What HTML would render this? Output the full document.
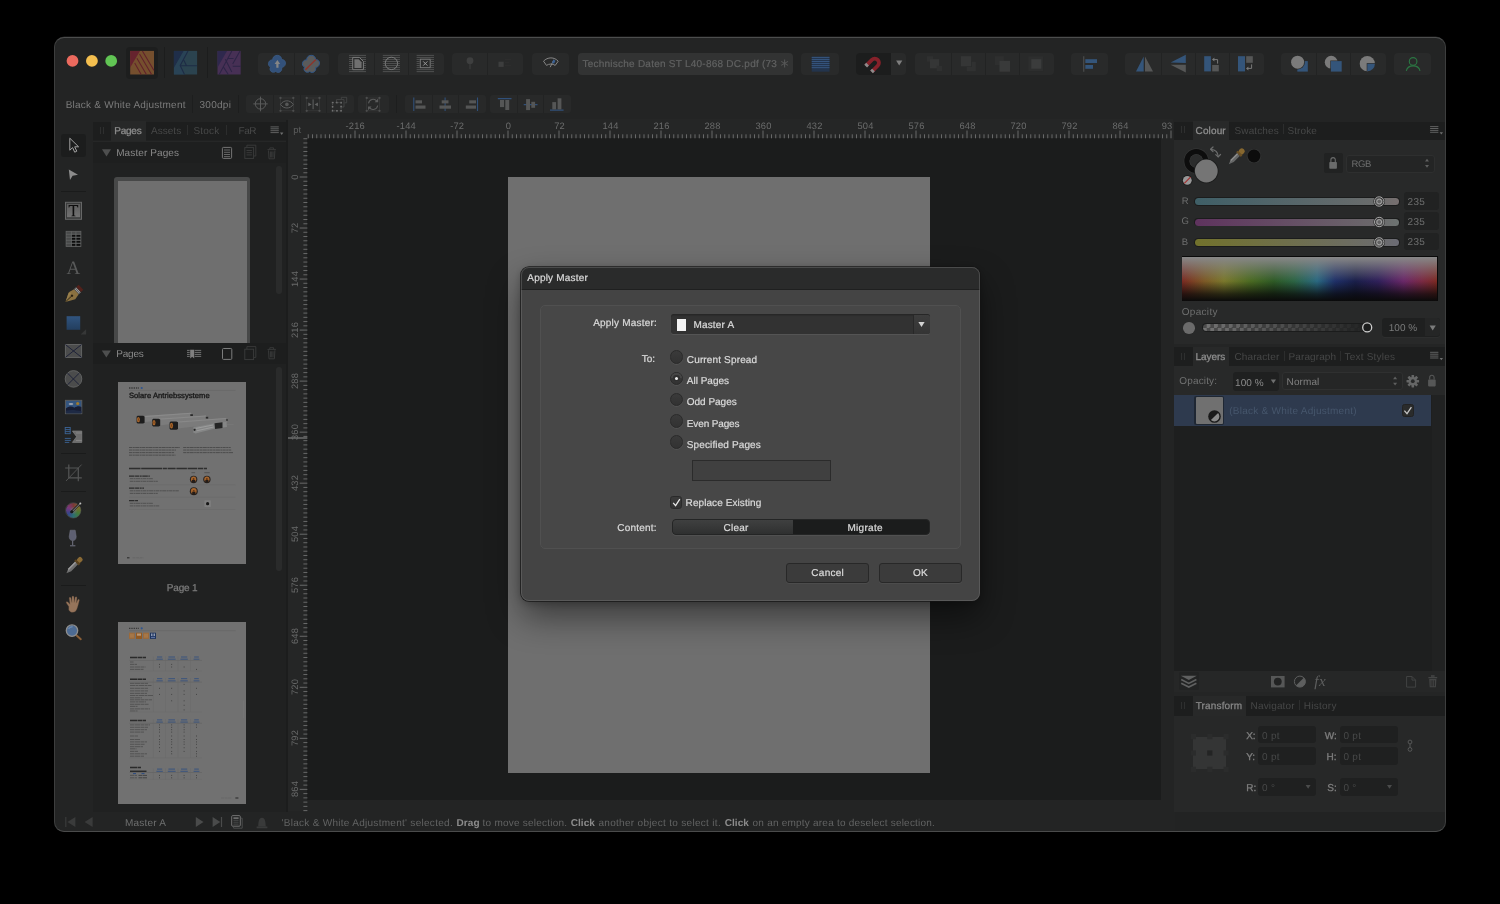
<!DOCTYPE html>
<html><head><meta charset="utf-8"><title>Apply Master</title>
<style>
*{box-sizing:border-box;margin:0;padding:0}
html,body{width:1500px;height:904px;background:#000;overflow:hidden}
body{font-family:"Liberation Sans",sans-serif;font-size:10px;color:#7a7a7a;position:relative;text-rendering:geometricPrecision}
.a{position:absolute}
.t{position:absolute;white-space:pre;line-height:12px;height:12px}
#win{will-change:transform;position:absolute;left:0;top:0;width:1500px;height:904px;background:#232424;clip-path:inset(36.600px 54.400px 71.900px 54.300px round 10px)}
#winb{position:absolute;left:54.3px;top:36.6px;width:1391.300px;height:795.500px;border-radius:10px;border:1px solid #3d3e3e;border-top-color:#4c4d4d;border-bottom-color:#4a4b4b;pointer-events:none}
.g{position:absolute;background:#292a2a;border-radius:4px}
.gd{position:absolute;background:#222323;width:1px}
.tab{position:absolute;background:#282929}
svg{position:absolute;left:0;top:0;overflow:visible}
</style></head><body>
<div id="win">
<!-- ===== top toolbar ===== -->
<div class="a" style="left:126.3px;top:47px;width:31.5px;height:31.5px;background:#1d1e1e;border-radius:4px"></div>
<div class="a" style="left:163.5px;top:46.7px;width:1px;height:31.5px;background:#1c1d1d"></div>
<div class="a" style="left:207.3px;top:46.7px;width:1px;height:31.5px;background:#1c1d1d"></div>
<!-- groups -->
<div class="g" style="left:258.3px;top:53.100px;width:70.9px;height:21.600px"></div><div class="gd" style="left:293.6px;top:53.100px;height:21.600px"></div>
<div class="g" style="left:338.3px;top:53.100px;width:105.4px;height:21.600px"></div><div class="gd" style="left:374px;top:53.100px;height:21.600px"></div><div class="gd" style="left:408px;top:53.100px;height:21.600px"></div>
<div class="g" style="left:451.7px;top:53.100px;width:71.3px;height:21.600px"></div><div class="gd" style="left:487px;top:53.100px;height:21.600px"></div>
<div class="g" style="left:531.7px;top:53.100px;width:37.8px;height:21.600px"></div>
<div class="g" style="left:578px;top:53.100px;width:214.8px;height:21.600px;background:#323333"></div>
<div class="t" style="left:582.400px;top:59px;font-size:10px;color:#616262;letter-spacing:.245px;-webkit-text-stroke:.2px #616262" id="doct">Technische Daten ST L40-868 DC.pdf (73</div>
<div class="g" style="left:801.3px;top:53.100px;width:37.5px;height:21.600px"></div>
<div class="g" style="left:856.2px;top:53.100px;width:50px;height:21.600px"></div>
<div class="a" style="left:856.2px;top:53.100px;width:34.6px;height:21.600px;background:#1c1d1d;border-radius:4px 0 0 4px"></div>
<div class="g" style="left:915.3px;top:53.100px;width:138.9px;height:21.600px"></div><div class="gd" style="left:951px;top:53.100px;height:21.600px"></div><div class="gd" style="left:985.2px;top:53.100px;height:21.600px"></div><div class="gd" style="left:1019.4px;top:53.100px;height:21.600px"></div>
<div class="g" style="left:1071.2px;top:53.100px;width:37.1px;height:21.600px"></div>
<div class="g" style="left:1125.3px;top:53.100px;width:138.9px;height:21.600px"></div><div class="gd" style="left:1161.3px;top:53.100px;height:21.600px"></div><div class="gd" style="left:1194.7px;top:53.100px;height:21.600px"></div><div class="gd" style="left:1228.9px;top:53.100px;height:21.600px"></div>
<div class="g" style="left:1280.5px;top:53.100px;width:105.6px;height:21.600px"></div><div class="gd" style="left:1316.2px;top:53.100px;height:21.600px"></div><div class="gd" style="left:1350.1px;top:53.100px;height:21.600px"></div>
<div class="g" style="left:1393.9px;top:53.100px;width:37.4px;height:21.600px"></div>
<!-- context toolbar -->
<div class="t" style="left:65.700px;top:100px;font-size:10px;color:#7b7b7b;letter-spacing:.23px" id="ctx1">Black &amp; White Adjustment</div>
<div class="t" style="left:199.500px;top:100px;font-size:10px;color:#7b7b7b;letter-spacing:.28px">300dpi</div>
<div class="a" style="left:192.200px;top:95px;width:1px;height:18px;background:#1d1e1e"></div>
<div class="a" style="left:238.100px;top:95px;width:1px;height:18px;background:#1d1e1e"></div>
<div class="a" style="left:396.400px;top:95px;width:1px;height:18px;background:#1d1e1e"></div>
<div class="g" style="left:246.3px;top:95px;width:107.9px;height:18px;border-radius:3px;background:#282929"></div><div class="gd" style="left:273.4px;top:95px;height:18px"></div><div class="gd" style="left:300.4px;top:95px;height:18px"></div><div class="gd" style="left:326.4px;top:95px;height:18px"></div>
<div class="g" style="left:357.5px;top:95px;width:31.2px;height:18px;border-radius:3px;background:#282929"></div>
<div class="g" style="left:404.7px;top:95px;width:81.5px;height:18px;border-radius:3px;background:#282929"></div><div class="gd" style="left:432.2px;top:95px;height:18px"></div><div class="gd" style="left:458px;top:95px;height:18px"></div>
<div class="g" style="left:489.7px;top:95px;width:81.5px;height:18px;border-radius:3px;background:#282929"></div><div class="gd" style="left:517.2px;top:95px;height:18px"></div><div class="gd" style="left:543px;top:95px;height:18px"></div>
<svg width="1500" height="904" viewBox="0 0 1500 904">
<!-- traffic lights -->
<circle cx="72.5" cy="60.9" r="5.9" fill="#ec6a5e"/><circle cx="91.9" cy="60.9" r="5.9" fill="#f4bf4f"/><circle cx="111.2" cy="60.9" r="5.9" fill="#61c554"/>
<!-- publisher -->
<g><rect x="130.200" y="50.900" width="23.800" height="23.600" fill="#754f2e"/>
<path d="M130.200 50.900H140L130.200 67.600Z" fill="#66232e"/>
<g stroke="#61212b" stroke-width="1.050" fill="none"><path d="M134.700 63.100L141.200 74.500M136.900 58.300L146.400 74.500M139.500 54.100L151.600 74.500M142.400 50.900L154 70.600"/></g></g>
<!-- designer -->
<g><rect x="173.900" y="50.900" width="23.200" height="23.600" fill="#2b434f"/>
<path d="M173.900 50.900H183.700L173.900 67.900Z" fill="#1f2e49"/>
<path d="M173.900 67.900L183.700 50.900H188L180.200 65.400L184.500 74.500H173.900Z" fill="#2a4358" opacity=".75"/>
<g stroke="#1e2c46" stroke-width="1.100" fill="none"><path d="M188 50.900L180.200 65.400L184.500 74.500M180.400 65.700H197.100M183.800 60.200L186.400 65.400"/></g></g>
<!-- photo -->
<g><rect x="217.500" y="50.900" width="23.200" height="23.600" fill="#473055"/>
<path d="M217.500 50.900H227L217.500 67.600Z" fill="#2e284d"/>
<g stroke="#2d2546" stroke-width="1.050" fill="none"><path d="M231.800 50.900L219.200 74.500M240 50.900L232.700 64.100M232.700 66.300H240.700M225.300 59.300L231.800 71.900M223.500 67.100L228.300 74.500M227.500 58.500H233.500"/></g></g>
<!-- flower 1 -->
<defs><path id="fl" d="M0-8.600C3-8.600 4.600-6.400 4.300-4.300C6.600-4.600 8.900-2.600 8.200.2C7.600 2.800 5.600 3.600 4.400 3.500C5.200 5.600 3.800 8.400 1 8.600C-.2 8.600-1 8 -1.400 7.400C-2.400 8.600-5 9-6.600 7C-7.600 5.600-7.200 4-6.600 3.200C-8.400 2.600-9.400 .4-8.400-1.800C-7.600-3.600-5.800-4.200-4.400-4C-4.800-6.200-3-8.600 0-8.600Z"/></defs>
<g transform="translate(277.200 63.900)"><use href="#fl" fill="#33517a" stroke="#3a5a84" stroke-width=".8"/><path d="M.2-3.800L3 .2H1.300V3.800H-.9V.2H-2.600Z" fill="#858585"/></g>
<g transform="translate(311.200 63.900)"><use href="#fl" fill="#5a5b5b" stroke="#305789" stroke-width="1"/><path d="M-5.800 5.800L4.700-4.400" stroke="#8e3329" stroke-width="1.300"/></g>
<!-- text wrap icons -->
<path d="M349 55.40H366M349 57.43H366M349 59.46H366M349 61.49H366M349 63.52H366M349 65.55H366M349 67.58H366M349 69.61H366M349 71.64H366M382.8 55.40H400M382.8 57.43H400M382.8 59.46H400M382.8 61.49H400M382.8 63.52H400M382.8 65.55H400M382.8 67.58H400M382.8 69.61H400M382.8 71.64H400M416.6 55.40H434M416.6 57.43H434M416.6 69.61H434M416.6 71.64H434M416.6 59.46H419.6M416.6 61.49H419.6M416.6 63.52H419.6M416.6 65.55H419.6M416.6 67.58H419.6M431 59.46H434M431 61.49H434M431 63.52H434M431 65.55H434M431 67.58H434" stroke="#4f5050" stroke-width="1" fill="none"/>
<path d="M352.700 57.400h6.700l4 4v8.300h-10.700z" fill="#2a2b2b" stroke="#7a7b7b" stroke-width="1" stroke-linejoin="round"/><path d="M354.400 59.300h4.300l2.900 2.900v5.700h-7.200z" fill="#707070"/>
<circle cx="391.400" cy="63.400" r="6.200" fill="none" stroke="#7a7b7b" stroke-width="1"/>
<rect x="420.300" y="59.200" width="9.900" height="8.500" fill="#2a2b2b" stroke="#7a7b7b" stroke-width="1"/><path d="M423.200 61.400l4.200 4.200m0-4.200l-4.200 4.200" stroke="#9a9a9a" stroke-width="1"/>
<!-- pin / square (dim) -->
<circle cx="470" cy="60.7" r="3.4" fill="#3e3f3f"/><path d="M470 63v6.2" stroke="#3e3f3f" stroke-width="1"/>
<rect x="498.5" y="61.7" width="5.2" height="5.2" fill="#3d3e3e"/><path d="M505 59.5h6m-6 3h4m-4 3h6" stroke="#2e2f2f" stroke-width=".8"/>
<!-- preview eye -->
<g fill="none" stroke="#868686" stroke-width="1"><path d="M543.5 61.2C547.5 56.8 554.5 56.8 558.2 61.2L555.2 65.4C552.8 63.6 548.8 63.6 546.5 65.4Z"/><path d="M553.8 59.8L550.2 67.2"/></g><path d="M553.4 59.6l2.2 1.2-1.6 3-2-1z" fill="#3a6092"/>
<!-- baseline grid -->
<rect x="811.7" y="56.7" width="17.8" height="15" fill="#23344c"/><path d="M811.7 57.4h17.8m-17.8 2.05h17.8m-17.8 2.05h17.8m-17.8 2.05h17.8m-17.8 2.05h17.8m-17.8 2.05h17.8" stroke="#3b5e8b" stroke-width=".8"/>
<!-- magnet -->
<g transform="translate(874 63.600) rotate(45) scale(1.120)"><path d="M-5.400 6.600V-1A5.400 5.400 0 0 1 5.400-1V6.600H2V-1A2 2 0 0 0-2-1V6.600Z" fill="#86212a"/><rect x="-5.4" y="4.4" width="3.4" height="2.4" fill="#8c8c8c"/><rect x="2" y="4.4" width="3.4" height="2.4" fill="#8c8c8c"/></g>
<path d="M896.1 60.6h6.2l-3.1 4.9z" fill="#7e7e7e"/>
<!-- arrange (dim) -->
<g fill="#353636"><rect x="927" y="56.2" width="6" height="5.5" fill="#2f3030"/><rect x="930" y="59.2" width="9.2" height="9.1"/><rect x="936.7" y="65.8" width="5.3" height="5.4" fill="#2f3030"/>
<rect x="960.8" y="56.2" width="10.4" height="10.1"/><path d="M971.8 61.7h4v9.5h-9.1v-4.2h5.1z" fill="#303131"/>
<rect x="995" y="56.2" width="8.8" height="8.8" fill="#2e2f2f"/><rect x="999.5" y="60.8" width="10.5" height="10.9" fill="#393a3a"/>
<rect x="1028.3" y="56.3" width="14.8" height="14.8" fill="#2d2e2e"/><rect x="1031.3" y="59.2" width="10" height="9.5" fill="#3b3c3c"/></g>
<!-- align -->
<path d="M1083.7 56.2v15.5" stroke="#484949" stroke-width="1.3"/><rect x="1085.3" y="59.2" width="11.7" height="3.8" fill="#34557a"/><rect x="1085.3" y="65" width="7.7" height="3.8" fill="#34557a"/>
<!-- flips -->
<path d="M1136 71.4L1143.7 56.6V71.4Z" fill="#34557a"/><path d="M1145 56.6V71.4H1153Z" fill="#565757"/>
<path d="M1170.6 62.6L1185.8 54.8V63Z" fill="#34557a"/><path d="M1170.6 64.8H1185.8V72.6Z" fill="#565757"/>
<rect x="1204.2" y="56.2" width="6.7" height="15.2" fill="#34557a"/><rect x="1212.2" y="65" width="6.6" height="6.4" fill="#565757"/><path d="M1217.6 63.6v-4h-4.2" fill="none" stroke="#7a7a7a" stroke-width="1"/><path d="M1214.4 57.6v4l-2.4-2z" fill="#7a7a7a"/>
<rect x="1238" y="56.2" width="7" height="15.2" fill="#34557a"/><rect x="1246.2" y="56.2" width="6.6" height="6.6" fill="#565757"/><path d="M1251.6 64.4v4h-4.2" fill="none" stroke="#7a7a7a" stroke-width="1"/><path d="M1248.4 66.4v4l-2.4-2z" fill="#7a7a7a"/>
<!-- booleans -->
<rect x="1297.3" y="61.1" width="10.5" height="10.5" fill="#34557a"/><circle cx="1297.6" cy="62.2" r="7.3" fill="#2a2b2b"/><circle cx="1297.6" cy="62.2" r="6.5" fill="#7b7b7b"/>
<circle cx="1331.2" cy="62.2" r="6.4" fill="#7b7b7b"/><rect x="1330.3" y="60.5" width="11.4" height="11.1" fill="#2a2b2b"/><rect x="1330.9" y="61.1" width="10.8" height="10.5" fill="#34557a"/>
<circle cx="1367.3" cy="63.7" r="7.6" fill="#7b7b7b"/><path d="M1367.3 63.7H1375.6V71.7H1367.3Z" fill="#2a2b2b" transform="translate(-.6 -.6)"/><path d="M1367.3 63.7H1374.9A7.6 7.6 0 0 1 1367.3 71.3Z" fill="#34557a"/>
<!-- account -->
<g fill="none" stroke="#2b7743" stroke-width="1.1"><circle cx="1413.1" cy="61.4" r="3.8"/><path d="M1406.3 70.8A7 6.2 0 0 1 1420 70.8"/></g>
<!-- doc title asterisk -->
<g stroke="#555656" stroke-width="1.1"><path d="M784.6 59.4v8M781.2 61.4l6.8 4M788 61.4l-6.8 4"/></g>
<!-- ctx icons -->
<g fill="none" stroke="#5a5b5b" stroke-width="1"><circle cx="260.500" cy="103.900" r="5.200"/><path d="M260.500 96.600v14.700M253.300 103.900h14.400"/></g>
<g stroke="#3a3b3b" stroke-width=".7" fill="none"><rect x="280.500" y="98" width="12.800" height="12.800"/><rect x="306.700" y="98" width="12.800" height="12.800"/><rect x="366.700" y="98" width="12.800" height="12.800"/></g>
<g fill="#4c4d4d"><circle cx="280.5" cy="98" r="1.15"/><circle cx="280.5" cy="110.8" r="1.15"/><circle cx="293.3" cy="98" r="1.15"/><circle cx="293.3" cy="110.8" r="1.15"/><circle cx="306.7" cy="98" r="1.15"/><circle cx="306.7" cy="110.8" r="1.15"/><circle cx="319.5" cy="98" r="1.15"/><circle cx="319.5" cy="110.8" r="1.15"/><circle cx="366.7" cy="98" r="1.15"/><circle cx="366.7" cy="110.8" r="1.15"/><circle cx="379.5" cy="98" r="1.15"/><circle cx="379.5" cy="110.8" r="1.15"/></g>
<path d="M280.500 104.400C283.500 99.600 290.300 99.600 293.300 104.400C290.300 109.200 283.500 109.200 280.500 104.400Z" fill="#292a2a" stroke="#5c5d5d" stroke-width="1"/><circle cx="286.900" cy="104.400" r="1.800" fill="#565757"/>
<path d="M313.100 99.400v9.800" stroke="#626363" stroke-width="1"/><path d="M308.300 102.500l3.300 1.900-3.300 1.900zM317.900 102.500l-3.300 1.900 3.300 1.900z" fill="#626363"/>
<g fill="none" stroke="#484949" stroke-width=".8"><path d="M336.500 102v-2.400h7.500v7.400h-2.400"/><path d="M341.300 99.200v-1.900h5.400v5.500h-2.200"/></g>
<rect x="332.600" y="102.600" width="8.500" height="8.200" fill="none" stroke="#555656" stroke-width=".8" stroke-dasharray="1.400 1.400"/>
<g fill="#707171"><rect x="331.8" y="101.8" width="1.600" height="1.600"/><rect x="336.1" y="101.8" width="1.600" height="1.600"/><rect x="340.3" y="101.8" width="1.600" height="1.600"/><rect x="331.8" y="105.9" width="1.600" height="1.600"/><rect x="340.3" y="105.9" width="1.600" height="1.600"/><rect x="331.8" y="110.0" width="1.600" height="1.600"/><rect x="336.1" y="110.0" width="1.600" height="1.600"/><rect x="340.3" y="110.0" width="1.600" height="1.600"/></g>
<g fill="none" stroke="#5a5b5b" stroke-width="1.100"><path d="M368.500 103.300a4.700 4.700 0 0 1 8.300-2.200M377.700 105.500a4.700 4.700 0 0 1-8.300 2.200"/></g><path d="M378.200 98.600v3.600h-3.600zM368 110.200v-3.600h3.600z" fill="#5a5b5b"/>
<!-- align icons ctx -->
<g stroke="#30507a" stroke-width="1.100"><path d="M413.800 97.500v13.600M445.100 97.500v13.600M477.500 97.500v13.600M497.800 98.600h13.700M523.700 104.600h13.800M550 110.100h13.600"/></g>
<g fill="#555656"><rect x="415.500" y="100.300" width="6.500" height="3.100"/><rect x="415.500" y="105.500" width="10" height="3.200"/>
<rect x="441.700" y="100.300" width="6.800" height="3.100"/><rect x="439.500" y="105.500" width="11.500" height="3.200"/>
<rect x="469.200" y="100.300" width="6.800" height="3.100"/><rect x="465.800" y="105.500" width="10.200" height="3.200"/>
<rect x="500" y="100" width="4.100" height="7.100"/><rect x="505.300" y="100" width="3.900" height="10"/>
<rect x="526.100" y="99.100" width="3.900" height="11"/><rect x="531.300" y="101.800" width="3.800" height="6"/>
<rect x="552.300" y="102.100" width="3.800" height="7.300"/><rect x="557.600" y="98.300" width="3.800" height="11.100"/></g>

</svg>
<!-- ===== left tools + pages panel ===== -->
<div class="a" style="left:61.3px;top:133.7px;width:24.6px;height:22.9px;background:#1c1d1d;border-radius:3px"></div>
<div class="a" style="left:60.8px;top:191.2px;width:25px;height:1px;background:#1a1b1b"></div>
<div class="a" style="left:60.8px;top:453.2px;width:25px;height:1px;background:#1a1b1b"></div>
<div class="a" style="left:60.8px;top:491.3px;width:25px;height:1px;background:#1a1b1b"></div>
<div class="a" style="left:60.8px;top:584.6px;width:25px;height:1px;background:#1a1b1b"></div>
<!-- panel bg -->
<div class="a" style="left:93px;top:120.2px;width:192.7px;height:692px;background:#202121"></div>
<div class="a" style="left:285.7px;top:120.2px;width:2.3px;height:692px;background:#1c1d1d"></div>
<div class="a" style="left:93px;top:120.200px;width:192.700px;height:1.500px;background:#232424"></div><div class="a" style="left:93px;top:121.700px;width:192.700px;height:18.100px;background:#1d1e1e"></div>
<div class="tab" style="left:111px;top:120.700px;width:35.200px;height:20.300px;background:#272828"></div>
<div class="a" style="left:93px;top:140.500px;width:192.700px;height:1.500px;background:#262727"></div><div class="a" style="left:93px;top:142px;width:192.700px;height:21.300px;background:#1e1f1f"></div>
<div class="t" style="left:114.3px;top:126px;color:#8d8d8d;font-size:10px;letter-spacing:-.25px;-webkit-text-stroke:0.30px #8d8d8d">Pages</div>
<div class="t" style="left:151px;top:126px;color:#474848;font-size:10px;letter-spacing:.03px">Assets</div>
<div class="t" style="left:193.4px;top:126px;color:#474848;font-size:10px;letter-spacing:.2px">Stock</div>
<div class="t" style="left:238.6px;top:126px;color:#474848;font-size:10px;letter-spacing:-.5px">FaR</div>
<div class="a" style="left:186.6px;top:124.5px;width:1px;height:10px;background:#2c2d2d"></div>
<div class="a" style="left:226px;top:124.5px;width:1px;height:10px;background:#2c2d2d"></div>
<div class="a" style="left:99.9px;top:126.800px;width:1px;height:7px;background:#2e2f2f"></div>
<div class="a" style="left:102.5px;top:126.800px;width:1px;height:7px;background:#2e2f2f"></div>
<div class="t" style="left:116.2px;top:148px;color:#8a8a8a;font-size:10px;letter-spacing:.1px">Master Pages</div>
<!-- master thumb -->
<div class="a" style="left:276.3px;top:166px;width:6.2px;height:128px;background:#2a2b2b;border-radius:3px"></div>
<div class="a" style="left:114.1px;top:177px;width:136.1px;height:170px;background:#474848;border-radius:3px 3px 0 0"></div>
<div class="a" style="left:118px;top:180.9px;width:128.7px;height:165px;background:#6f6f6f"></div>
<!-- pages header -->
<div class="a" style="left:93px;top:343px;width:192.700px;height:20.800px;background:#1d1e1e"></div>
<div class="t" style="left:116.2px;top:349px;color:#8a8a8a;font-size:10px;letter-spacing:-.2px">Pages</div>
<div class="a" style="left:276.3px;top:367.3px;width:6.2px;height:204px;background:#2a2b2b;border-radius:3px"></div>
<!-- page 1 -->
<div class="a" id="p1" style="left:118px;top:381.700px;width:128.300px;height:182px;background:#717171"></div>
<div class="t" style="left:129px;top:391px;font-size:7.600px;color:#1b1b1b;letter-spacing:.04px;line-height:10px;height:10px;-webkit-text-stroke:0.38px #1b1b1b">Solare Antriebssysteme</div>
<div class="t" style="left:166.8px;top:583px;color:#7c7c7c;font-size:10px;letter-spacing:-.2px;-webkit-text-stroke:.25px #7c7c7c">Page 1</div>
<!-- page 2 -->
<div class="a" id="p2" style="left:118px;top:621.900px;width:128.300px;height:181.800px;background:#717171"></div>
<svg width="1500" height="904" viewBox="0 0 1500 904">
<defs><linearGradient id="rb" x1="0" y1="0" x2="0" y2="1"><stop offset="0" stop-color="#30547f"/><stop offset="1" stop-color="#233e5e"/></linearGradient>
<linearGradient id="tf" x1="0" y1="0" x2="0" y2="1"><stop offset="0" stop-color="#5c5c5c"/><stop offset="1" stop-color="#727272"/></linearGradient></defs>
<!-- move tool -->
<path d="M69.8 138.2V150.2L72.6 147.6L74.7 152.2L76.8 151.2L74.7 146.8H78.6Z" fill="#1c1d1d" stroke="#a2a2a2" stroke-width="1" stroke-linejoin="round"/>
<!-- node tool -->
<path d="M68.8 169.4L78 174.7L72.6 175.7L70 180Z" fill="#8c8c8c"/>
<!-- frame text -->
<rect x="65.500" y="202.300" width="16" height="17" fill="#3b3c3c" stroke="#666767" stroke-width="1"/><rect x="67" y="204" width="13" height="13.200" fill="url(#tf)"/>
<path d="M68.600 205h9.600v2.500h-.7c-.15-1.100-.6-1.500-1.700-1.500h-1.600v8.700c0 .75.300.95 1.300 1.050v.55h-4.200v-.55c1-.1 1.300-.3 1.300-1.050v-8.700h-1.600c-1.100 0-1.550.4-1.700 1.500h-.7z" fill="#0e0e0e"/>
<!-- table -->
<rect x="66.100" y="231.300" width="14.800" height="15.200" fill="#484949" stroke="#626363" stroke-width=".8"/>
<g fill="#0c0c0c"><rect x="71.800" y="234.800" width="3.700" height="2"/><rect x="76.300" y="234.800" width="4" height="2"/><rect x="71.800" y="237.800" width="3.700" height="2"/><rect x="76.300" y="237.800" width="4" height="2"/><rect x="71.800" y="240.800" width="3.700" height="2"/><rect x="76.300" y="240.800" width="4" height="2"/><rect x="71.800" y="243.800" width="3.700" height="2"/><rect x="76.300" y="243.800" width="4" height="2"/></g>
<g stroke="#6a6b6b" stroke-width=".6"><path d="M66 234.300h15M66 237.300h15M66 240.300h15M66 243.300h15M71.400 231.400v15.200M75.900 231.400v15.200"/></g>
<!-- pen -->
<g transform="translate(74.400 293.500) rotate(47) scale(1.070)"><path d="M-3.200-2.500h6.400l1.200 5.500-4.400 8.500-4.400-8.500z" fill="#8a7140"/><path d="M0 11.500V3.500" stroke="#2a2214" stroke-width=".8"/><circle cx="0" cy="3" r="1.100" fill="#2a2214"/><rect x="-3.200" y="-5.200" width="6.400" height="2.400" fill="#9a9a9a"/><rect x="-3.200" y="-8.400" width="6.400" height="3" fill="#53211b"/><path d="M-3.200-4h6.400" stroke="#444" stroke-width=".6"/><path d="M-2.500 1.500l-1.600 2.300 4.100 7.500z" fill="#a68d58" opacity=".55"/></g>
<!-- rect -->
<rect x="66.600" y="316.200" width="13.600" height="13.600" fill="url(#rb)"/><path d="M86.100 329.200v5.300h-5.500z" fill="#363737"/>
<!-- frame rect -->
<rect x="65.400" y="344.500" width="16.200" height="12.900" fill="#4b4c4c" stroke="#666767" stroke-width=".9"/><path d="M65.400 344.500l16.200 12.900M81.600 344.500l-16.200 12.900" stroke="#191d36" stroke-width=".9"/>
<!-- frame ellipse -->
<circle cx="73.500" cy="378.900" r="8.300" fill="#4b4c4c" stroke="#646565" stroke-width=".9"/><path d="M67.600 373.200l11.600 11.600M79.200 373.200l-11.600 11.600" stroke="#191d36" stroke-width=".9"/>
<!-- image -->
<rect x="65.400" y="400.300" width="16.400" height="13.400" fill="#34557f" stroke="#5e5f5f" stroke-width=".9"/><path d="M65.900 408.500c3-2.500 6-2.500 8.500-.8 2.500-1.800 5-2 7-.8v6.300h-15.500z" fill="#171d33"/><path d="M65.900 410.800c4-1.500 10-1 15.500.5v2h-15.500z" fill="#1e2a45"/><circle cx="77.700" cy="403.500" r="1.600" fill="#a07a2c"/><ellipse cx="71" cy="404" rx="2.400" ry=".9" fill="#9aa3b0"/>
<!-- data merge -->
<g fill="none" stroke="#3b6496" stroke-width=".9"><rect x="65.200" y="427.500" width="5" height="6.200"/><path d="M65.200 429.600h5M65.200 431.600h5M64.800 438.400h6M64.800 440.400h6M64.800 442.400h4.500"/></g><path d="M72.400 431h9.400v11.400h-9.400l4.200-5.700z" fill="#6c6c6c" stroke="#8a8a8a" stroke-width=".6"/><path d="M76 433h5.800M76 440.400h5.800" stroke="#8e8e8e" stroke-width=".8"/>
<!-- crop -->
<g fill="none" stroke="#555656" stroke-width="1.200"><path d="M68.800 464.400v13.500h13M65.100 468h13.200v13.300"/><path d="M66 481l15.600-16.400" stroke-width=".9"/></g>
<!-- glass -->
<path d="M70.200 530.200h5l1 6.400c0 2.800-1.500 4-3.500 4s-3.500-1.200-3.500-4z" fill="#5e6072" stroke="#747684" stroke-width=".5"/><path d="M72.700 540.600v4.600M70 545.800h5.400" stroke="#747684" stroke-width="1"/>
<!-- dropper -->
<g transform="translate(73.300 566.300) rotate(45) scale(1.220)"><rect x="-2" y="-9.800" width="4" height="4.800" rx="1.600" fill="#8a6a35"/><rect x="-2.600" y="-5.600" width="5.200" height="2" fill="#5a4320"/><path d="M-1.600-3.600h3.200v7.600l-1.600 4-1.600-4z" fill="#6e6e6e"/><path d="M-1.600-3.600h1.200v9.500l-1.200-2z" fill="#9a9a9a"/></g>
<!-- hand -->
<g fill="#95745b" stroke="#6e523c" stroke-width=".3"><path d="M68.800 606.500c-1.400-1.800-2.800-3.600-2.600-4.400.4-.8 1.600-.4 2.600.8l1.200 1.400-.8-6c-.1-1.200 1.500-1.400 1.800-.2l.9 4.400.1-5.500c0-1.200 1.800-1.200 1.900 0l.3 5.400.9-4.800c.3-1.200 1.900-.9 1.800.3l-.5 5.200 1.300-3.200c.5-1 1.900-.5 1.600.6-.8 3-1.400 6-2.400 8.500-.8 2-2 3.300-4.300 3.300-1.800 0-2.800-.8-3.800-2.400z"/></g>
<!-- zoom -->
<path d="M76.400 635.200l4.400 4" stroke="#8a5e36" stroke-width="2" stroke-linecap="round"/><circle cx="72" cy="630.600" r="5.700" fill="#4d6b93" stroke="#8e8e8e" stroke-width="1.300"/><path d="M68.600 629a3.800 3.800 0 0 1 4-2.200" stroke="#7f9cc0" stroke-width=".9" fill="none"/>
<!-- panel menu icon -->
<g id="pm"><path d="M270.500 126.900h8.300M270.500 128.800h8.300M270.500 130.700h8.300M270.500 132.600h8.300" stroke="#606161" stroke-width="1"/><path d="M280 132.600h3.400l-1.700 2.300z" fill="#6e6f6f"/></g>
<!-- header triangles -->
<path d="M102 149.200h9l-4.500 7.200z" fill="#4e4f4f"/><path d="M101.800 350.400h9.100l-4.550 7.100z" fill="#4e4f4f"/>
<!-- master header icons -->
<rect x="222.400" y="147.400" width="9.200" height="11" rx="1" fill="none" stroke="#7e7e7e" stroke-width=".9"/><path d="M224 150h6M224 152.300h6M224 154.500h6M224 156.600h6" stroke="#6e6e6e" stroke-width=".9"/>
<g fill="none" stroke="#3b3c3c" stroke-width=".9"><rect x="244.800" y="147.600" width="8.800" height="10.800"/><path d="M246.900 147.400v-2.200h8.900v10.800h-2M246.500 150.500h5.400M246.500 152.700h5.400M246.500 154.900h5.400"/></g>
<g fill="none" stroke="#3b3c3c" stroke-width=".9"><path d="M267.500 149.600h8.400M269.800 149.400v-1.500h3.800v1.500M268.500 150.500l.5 8.300h5.400l.5-8.300M270.400 151.500v6M271.700 151.500v6M273 151.500v6"/></g>
<!-- pages header icons -->
<path d="M187 350.400h14.200M187 352.400h14.200M187 354.400h14.200M187 356.400h14.200" stroke="#7a7b7b" stroke-width=".9"/><path d="M189.700 349.600h5v9.800l-2.500-2.200-2.500 2.200z" fill="#1e1f1f"/><path d="M190.200 349.800h4v8.800l-2-1.800-2 1.800z" fill="#808080"/>
<rect x="222.500" y="348.500" width="9.300" height="10.900" rx="1" fill="none" stroke="#7c7d7d" stroke-width="1"/>
<g fill="none" stroke="#3b3c3c" stroke-width=".9"><rect x="244.800" y="349.200" width="8.800" height="10.400"/><path d="M246.900 349v-2.400h8.900v10.800h-2"/></g>
<g fill="none" stroke="#3b3c3c" stroke-width=".9"><path d="M267.500 349.400h8.400M269.800 349.200v-1.500h3.800v1.500M268.500 350.300l.5 8.500h5.400l.5-8.500M270.400 351.300v6M271.700 351.300v6M273 351.300v6"/></g>
</svg>
<!-- colour wheel + A -->
<div class="a" style="left:65.500px;top:502.700px;width:15.400px;height:15.400px;border-radius:50%;background:conic-gradient(from 0deg,#7a3838,#7a6c2c,#467a38,#2c7070,#38448a,#7a387a,#7a3838)"></div>
<div class="a" style="left:69.500px;top:506.700px;width:7.400px;height:7.400px;border-radius:50%;background:radial-gradient(#6a6a6a,rgba(90,90,90,0))"></div>
<svg width="1500" height="904" viewBox="0 0 1500 904"><circle cx="73.200" cy="510.400" r="7.700" fill="none" stroke="#555" stroke-width=".5"/><path d="M71.500 512l8-8" stroke="#1a1a1a" stroke-width="2.200" stroke-linecap="round"/><path d="M72.500 511.200l7.300-7.300" stroke="#a8a8a8" stroke-width=".8" stroke-linecap="round"/><circle cx="80.300" cy="503.400" r="1" fill="#c0c0c0"/><circle cx="71.800" cy="511.800" r="1.500" fill="#1a1a1a"/></svg>
<div class="t" style="left:63.400px;top:259px;width:20px;text-align:center;font-family:'Liberation Serif',serif;font-size:19px;line-height:20px;height:20px;color:#595a5a">A</div>
<!-- ===== canvas + rulers ===== -->
<div class="a" style="left:288px;top:119.500px;width:884.500px;height:692.500px;background:#232424"></div>
<div class="a" style="left:307.400px;top:138.300px;width:853.400px;height:661.500px;background:#1b1c1c"></div>
<div class="a" style="left:288px;top:118.800px;width:884.500px;height:19.500px;background:#252626"></div>
<div class="a" style="left:288px;top:138.300px;width:19.400px;height:673.200px;background:#252626"></div>
<div class="a" style="left:508px;top:177px;width:421.700px;height:596.400px;background:#6f6f6f"></div>
<svg width="1500" height="904" viewBox="0 0 1500 904"><path d="M308.25 134.300v4M312.50 134.300v4M316.75 134.300v4M321.00 134.300v4M325.25 134.300v4M329.50 134.300v4M333.75 134.300v4M338.00 134.300v4M342.25 134.300v4M346.50 134.300v4M350.75 134.300v4M355.00 130.500v7.800M359.25 134.300v4M363.50 134.300v4M367.75 134.300v4M372.00 134.300v4M376.25 134.300v4M380.50 134.300v4M384.75 134.300v4M389.00 134.300v4M393.25 134.300v4M397.50 134.300v4M401.75 134.300v4M406.00 130.500v7.800M410.25 134.300v4M414.50 134.300v4M418.75 134.300v4M423.00 134.300v4M427.25 134.300v4M431.50 134.300v4M435.75 134.300v4M440.00 134.300v4M444.25 134.300v4M448.50 134.300v4M452.75 134.300v4M457.00 130.500v7.800M461.25 134.300v4M465.50 134.300v4M469.75 134.300v4M474.00 134.300v4M478.25 134.300v4M482.50 134.300v4M486.75 134.300v4M491.00 134.300v4M495.25 134.300v4M499.50 134.300v4M503.75 134.300v4M508.00 130.500v7.800M512.25 134.300v4M516.50 134.300v4M520.75 134.300v4M525.00 134.300v4M529.25 134.300v4M533.50 134.300v4M537.75 134.300v4M542.00 134.300v4M546.25 134.300v4M550.50 134.300v4M554.75 134.300v4M559.00 130.500v7.800M563.25 134.300v4M567.50 134.300v4M571.75 134.300v4M576.00 134.300v4M580.25 134.300v4M584.50 134.300v4M588.75 134.300v4M593.00 134.300v4M597.25 134.300v4M601.50 134.300v4M605.75 134.300v4M610.00 130.500v7.800M614.25 134.300v4M618.50 134.300v4M622.75 134.300v4M627.00 134.300v4M631.25 134.300v4M635.50 134.300v4M639.75 134.300v4M644.00 134.300v4M648.25 134.300v4M652.50 134.300v4M656.75 134.300v4M661.00 130.500v7.800M665.25 134.300v4M669.50 134.300v4M673.75 134.300v4M678.00 134.300v4M682.25 134.300v4M686.50 134.300v4M690.75 134.300v4M695.00 134.300v4M699.25 134.300v4M703.50 134.300v4M707.75 134.300v4M712.00 130.500v7.800M716.25 134.300v4M720.50 134.300v4M724.75 134.300v4M729.00 134.300v4M733.25 134.300v4M737.50 134.300v4M741.75 134.300v4M746.00 134.300v4M750.25 134.300v4M754.50 134.300v4M758.75 134.300v4M763.00 130.500v7.800M767.25 134.300v4M771.50 134.300v4M775.75 134.300v4M780.00 134.300v4M784.25 134.300v4M788.50 134.300v4M792.75 134.300v4M797.00 134.300v4M801.25 134.300v4M805.50 134.300v4M809.75 134.300v4M814.00 130.500v7.800M818.25 134.300v4M822.50 134.300v4M826.75 134.300v4M831.00 134.300v4M835.25 134.300v4M839.50 134.300v4M843.75 134.300v4M848.00 134.300v4M852.25 134.300v4M856.50 134.300v4M860.75 134.300v4M865.00 130.500v7.800M869.25 134.300v4M873.50 134.300v4M877.75 134.300v4M882.00 134.300v4M886.25 134.300v4M890.50 134.300v4M894.75 134.300v4M899.00 134.300v4M903.25 134.300v4M907.50 134.300v4M911.75 134.300v4M916.00 130.500v7.800M920.25 134.300v4M924.50 134.300v4M928.75 134.300v4M933.00 134.300v4M937.25 134.300v4M941.50 134.300v4M945.75 134.300v4M950.00 134.300v4M954.25 134.300v4M958.50 134.300v4M962.75 134.300v4M967.00 130.500v7.800M971.25 134.300v4M975.50 134.300v4M979.75 134.300v4M984.00 134.300v4M988.25 134.300v4M992.50 134.300v4M996.75 134.300v4M1001.00 134.300v4M1005.25 134.300v4M1009.50 134.300v4M1013.75 134.300v4M1018.00 130.500v7.800M1022.25 134.300v4M1026.50 134.300v4M1030.75 134.300v4M1035.00 134.300v4M1039.25 134.300v4M1043.50 134.300v4M1047.75 134.300v4M1052.00 134.300v4M1056.25 134.300v4M1060.50 134.300v4M1064.75 134.300v4M1069.00 130.500v7.800M1073.25 134.300v4M1077.50 134.300v4M1081.75 134.300v4M1086.00 134.300v4M1090.25 134.300v4M1094.50 134.300v4M1098.75 134.300v4M1103.00 134.300v4M1107.25 134.300v4M1111.50 134.300v4M1115.75 134.300v4M1120.00 130.500v7.800M1124.25 134.300v4M1128.50 134.300v4M1132.75 134.300v4M1137.00 134.300v4M1141.25 134.300v4M1145.50 134.300v4M1149.75 134.300v4M1154.00 134.300v4M1158.25 134.300v4M1162.50 134.300v4M1166.75 134.300v4M1171.00 130.500v7.800" stroke="#686969" stroke-width="1" fill="none"/><path d="M303.400 138.73h4M303.400 142.98h4M303.400 147.23h4M303.400 151.49h4M303.400 155.74h4M303.400 159.99h4M303.400 164.24h4M303.400 168.50h4M303.400 172.75h4M299.700 177.00h7.700M303.400 181.25h4M303.400 185.50h4M303.400 189.76h4M303.400 194.01h4M303.400 198.26h4M303.400 202.51h4M303.400 206.77h4M303.400 211.02h4M303.400 215.27h4M303.400 219.53h4M303.400 223.78h4M299.700 228.03h7.700M303.400 232.28h4M303.400 236.53h4M303.400 240.79h4M303.400 245.04h4M303.400 249.29h4M303.400 253.55h4M303.400 257.80h4M303.400 262.05h4M303.400 266.30h4M303.400 270.56h4M303.400 274.81h4M299.700 279.06h7.700M303.400 283.31h4M303.400 287.56h4M303.400 291.82h4M303.400 296.07h4M303.400 300.32h4M303.400 304.58h4M303.400 308.83h4M303.400 313.08h4M303.400 317.33h4M303.400 321.59h4M303.400 325.84h4M299.700 330.09h7.700M303.400 334.34h4M303.400 338.60h4M303.400 342.85h4M303.400 347.10h4M303.400 351.35h4M303.400 355.61h4M303.400 359.86h4M303.400 364.11h4M303.400 368.36h4M303.400 372.62h4M303.400 376.87h4M299.700 381.12h7.700M303.400 385.37h4M303.400 389.62h4M303.400 393.88h4M303.400 398.13h4M303.400 402.38h4M303.400 406.63h4M303.400 410.89h4M303.400 415.14h4M303.400 419.39h4M303.400 423.64h4M303.400 427.90h4M299.700 432.15h7.700M303.400 436.40h4M303.400 440.66h4M303.400 444.91h4M303.400 449.16h4M303.400 453.41h4M303.400 457.67h4M303.400 461.92h4M303.400 466.17h4M303.400 470.42h4M303.400 474.68h4M303.400 478.93h4M299.700 483.18h7.700M303.400 487.43h4M303.400 491.69h4M303.400 495.94h4M303.400 500.19h4M303.400 504.44h4M303.400 508.70h4M303.400 512.95h4M303.400 517.20h4M303.400 521.45h4M303.400 525.71h4M303.400 529.96h4M299.700 534.21h7.700M303.400 538.46h4M303.400 542.72h4M303.400 546.97h4M303.400 551.22h4M303.400 555.47h4M303.400 559.73h4M303.400 563.98h4M303.400 568.23h4M303.400 572.48h4M303.400 576.74h4M303.400 580.99h4M299.700 585.24h7.700M303.400 589.49h4M303.400 593.75h4M303.400 598.00h4M303.400 602.25h4M303.400 606.50h4M303.400 610.76h4M303.400 615.01h4M303.400 619.26h4M303.400 623.51h4M303.400 627.77h4M303.400 632.02h4M299.700 636.27h7.700M303.400 640.52h4M303.400 644.78h4M303.400 649.03h4M303.400 653.28h4M303.400 657.53h4M303.400 661.79h4M303.400 666.04h4M303.400 670.29h4M303.400 674.54h4M303.400 678.80h4M303.400 683.05h4M299.700 687.30h7.700M303.400 691.55h4M303.400 695.81h4M303.400 700.06h4M303.400 704.31h4M303.400 708.56h4M303.400 712.82h4M303.400 717.07h4M303.400 721.32h4M303.400 725.57h4M303.400 729.83h4M303.400 734.08h4M299.700 738.33h7.700M303.400 742.58h4M303.400 746.84h4M303.400 751.09h4M303.400 755.34h4M303.400 759.59h4M303.400 763.85h4M303.400 768.10h4M303.400 772.35h4M303.400 776.60h4M303.400 780.86h4M303.400 785.11h4M299.700 789.36h7.700M303.400 793.61h4M303.400 797.87h4M303.400 802.12h4M303.400 806.37h4M303.400 810.62h4" stroke="#686969" stroke-width="1" fill="none"/><path d="M288 438h19.400" stroke="#8e8e8e" stroke-width="1"/></svg>
<div class="t" style="left:335.2px;top:120px;width:40px;text-align:center;font-size:9.300px;color:#6b6c6c;letter-spacing:.15px">-216</div>
<div class="t" style="left:386.2px;top:120px;width:40px;text-align:center;font-size:9.300px;color:#6b6c6c;letter-spacing:.15px">-144</div>
<div class="t" style="left:437.2px;top:120px;width:40px;text-align:center;font-size:9.300px;color:#6b6c6c;letter-spacing:.15px">-72</div>
<div class="t" style="left:488.5px;top:120px;width:40px;text-align:center;font-size:9.300px;color:#6b6c6c;letter-spacing:.15px">0</div>
<div class="t" style="left:539.5px;top:120px;width:40px;text-align:center;font-size:9.300px;color:#6b6c6c;letter-spacing:.15px">72</div>
<div class="t" style="left:590.5px;top:120px;width:40px;text-align:center;font-size:9.300px;color:#6b6c6c;letter-spacing:.15px">144</div>
<div class="t" style="left:641.5px;top:120px;width:40px;text-align:center;font-size:9.300px;color:#6b6c6c;letter-spacing:.15px">216</div>
<div class="t" style="left:692.5px;top:120px;width:40px;text-align:center;font-size:9.300px;color:#6b6c6c;letter-spacing:.15px">288</div>
<div class="t" style="left:743.5px;top:120px;width:40px;text-align:center;font-size:9.300px;color:#6b6c6c;letter-spacing:.15px">360</div>
<div class="t" style="left:794.5px;top:120px;width:40px;text-align:center;font-size:9.300px;color:#6b6c6c;letter-spacing:.15px">432</div>
<div class="t" style="left:845.5px;top:120px;width:40px;text-align:center;font-size:9.300px;color:#6b6c6c;letter-spacing:.15px">504</div>
<div class="t" style="left:896.5px;top:120px;width:40px;text-align:center;font-size:9.300px;color:#6b6c6c;letter-spacing:.15px">576</div>
<div class="t" style="left:947.5px;top:120px;width:40px;text-align:center;font-size:9.300px;color:#6b6c6c;letter-spacing:.15px">648</div>
<div class="t" style="left:998.5px;top:120px;width:40px;text-align:center;font-size:9.300px;color:#6b6c6c;letter-spacing:.15px">720</div>
<div class="t" style="left:1049.5px;top:120px;width:40px;text-align:center;font-size:9.300px;color:#6b6c6c;letter-spacing:.15px">792</div>
<div class="t" style="left:1100.5px;top:120px;width:40px;text-align:center;font-size:9.300px;color:#6b6c6c;letter-spacing:.15px">864</div>
<div class="t" style="left:1161.700px;top:120px;width:10.800px;overflow:hidden;font-size:9.300px;color:#6b6c6c;letter-spacing:.15px">936</div>
<div class="t" style="left:293.300px;top:125px;font-size:9.500px;color:#5c5d5d">pt</div>
<div class="t" style="left:274.6px;top:170.8px;width:40px;text-align:center;font-size:9.300px;color:#696a6a;letter-spacing:.15px;transform:rotate(-90deg)">0</div>
<div class="t" style="left:274.6px;top:221.8px;width:40px;text-align:center;font-size:9.300px;color:#696a6a;letter-spacing:.15px;transform:rotate(-90deg)">72</div>
<div class="t" style="left:274.6px;top:272.9px;width:40px;text-align:center;font-size:9.300px;color:#696a6a;letter-spacing:.15px;transform:rotate(-90deg)">144</div>
<div class="t" style="left:274.6px;top:323.9px;width:40px;text-align:center;font-size:9.300px;color:#696a6a;letter-spacing:.15px;transform:rotate(-90deg)">216</div>
<div class="t" style="left:274.6px;top:374.9px;width:40px;text-align:center;font-size:9.300px;color:#696a6a;letter-spacing:.15px;transform:rotate(-90deg)">288</div>
<div class="t" style="left:274.6px;top:425.9px;width:40px;text-align:center;font-size:9.300px;color:#696a6a;letter-spacing:.15px;transform:rotate(-90deg)">360</div>
<div class="t" style="left:274.6px;top:477.0px;width:40px;text-align:center;font-size:9.300px;color:#696a6a;letter-spacing:.15px;transform:rotate(-90deg)">432</div>
<div class="t" style="left:274.6px;top:528.0px;width:40px;text-align:center;font-size:9.300px;color:#696a6a;letter-spacing:.15px;transform:rotate(-90deg)">504</div>
<div class="t" style="left:274.6px;top:579.0px;width:40px;text-align:center;font-size:9.300px;color:#696a6a;letter-spacing:.15px;transform:rotate(-90deg)">576</div>
<div class="t" style="left:274.6px;top:630.1px;width:40px;text-align:center;font-size:9.300px;color:#696a6a;letter-spacing:.15px;transform:rotate(-90deg)">648</div>
<div class="t" style="left:274.6px;top:681.1px;width:40px;text-align:center;font-size:9.300px;color:#696a6a;letter-spacing:.15px;transform:rotate(-90deg)">720</div>
<div class="t" style="left:274.6px;top:732.1px;width:40px;text-align:center;font-size:9.300px;color:#696a6a;letter-spacing:.15px;transform:rotate(-90deg)">792</div>
<div class="t" style="left:274.6px;top:783.2px;width:40px;text-align:center;font-size:9.300px;color:#696a6a;letter-spacing:.15px;transform:rotate(-90deg)">864</div>
<!-- ===== thumbnails content ===== -->
<svg width="1500" height="904" viewBox="0 0 1500 904">
<g>
<path d="M129 388h1.400M131.300 388h1.400M133.600 388h1.400M135.900 388h1.400M138.200 388h.8" stroke="#3a3a3a" stroke-width="1.300"/><circle cx="141.700" cy="388" r="1.100" fill="#2f5590"/>
<path d="M129 390.400h106.600" stroke="#626262" stroke-width=".5"/>
<g>
<path d="M140 416.200L191 412.800L192.600 416.400L141 422.600Z" fill="#7d7d7d"/><path d="M140 416.200L191 412.800L191.300 413.800L140.200 417.500Z" fill="#8a8a8a"/>
<path d="M155.500 418.800L206 415.600L207.600 419.400L157 425.800Z" fill="#7c7c7c"/><path d="M155.500 418.800L206 415.600L206.300 416.600L155.700 420Z" fill="#898989"/>
<path d="M173 421.800L226 418L227.600 422.400L174 429Z" fill="#7b7b7b"/><path d="M173 421.800L226 418L226.300 419L173.200 423Z" fill="#888888"/>
<rect x="190.300" y="414.200" width="2.600" height="1.800" fill="#2a2a2a"/><rect x="205.800" y="416.800" width="2.400" height="1.800" fill="#2a2a2a"/><circle cx="227" cy="420" r="1" fill="#3a3a3a"/>
<g transform="translate(140.6 419.6) scale(1.0)"><path d="M-3-3.800h5.500l1.500.6v6.400l-1.500.8h-5.500l-1-1v-5.800z" fill="#1c1c1c"/><ellipse cx="-2.200" cy="0" rx="1.500" ry="2.700" fill="#a8662b"/><ellipse cx="-2.200" cy="0" rx=".6" ry="1.300" fill="#7a4418"/></g>
<g transform="translate(156.2 422.6) scale(1.0)"><path d="M-3-3.800h5.500l1.500.6v6.400l-1.500.8h-5.500l-1-1v-5.800z" fill="#1c1c1c"/><ellipse cx="-2.200" cy="0" rx="1.500" ry="2.700" fill="#a8662b"/><ellipse cx="-2.200" cy="0" rx=".6" ry="1.300" fill="#7a4418"/></g>
<g transform="translate(173.8 425.6) scale(1.05)"><path d="M-3-3.800h5.500l1.500.6v6.400l-1.500.8h-5.500l-1-1v-5.800z" fill="#1c1c1c"/><ellipse cx="-2.200" cy="0" rx="1.500" ry="2.700" fill="#a8662b"/><ellipse cx="-2.200" cy="0" rx=".6" ry="1.300" fill="#7a4418"/></g>
<path d="M193.500 427L214.500 423.200L226.500 421.800L227 427L215 428.600L195.500 433.600L193.200 432.600Z" fill="#858686"/><path d="M214.500 423.200L222.500 422.200V428L215 429Z" fill="#242424"/><path d="M196 428.400L213 425M196.600 430.800L213.600 427" stroke="#a6a6a6" stroke-width=".7"/><circle cx="194.600" cy="429.800" r="1.100" fill="#222"/><path d="M227 424.500h6.500" stroke="#7c7c7c" stroke-width=".5"/>
</g>
<path d="M129 447.50h51M129 450.05h47M129 452.60h45.5M129 455.15h46.5" stroke="#4b4b4b" stroke-width="0.95" stroke-dasharray="3.200 .500 2.100 .400 4.300 .500 1.700 .400" fill="none"/>
<path d="M183.2 447.50h47.5M183.2 450.05h48M183.2 452.60h49.8" stroke="#4b4b4b" stroke-width="0.95" stroke-dasharray="3.200 .500 2.100 .400 4.300 .500 1.700 .400" fill="none"/>
<path d="M129 468.500h85" stroke="#2e2e2e" stroke-width="1.350" stroke-dasharray="11.500 .700 21 .700 4 .700 8 .800 10.500 .700 9.500 .700 5.500 .700 3"/>
<path d="M191.500 472.700h3.600M204.300 472.700h5.400" stroke="#4c4c4c" stroke-width=".8"/>
<path d="M129 476.100h20.800M129 488.200h15M129 500.700h9" stroke="#2c2c2c" stroke-width="1.300" stroke-dasharray="5.500 .600 4 .600 2 .600"/>
<path d="M129.8 478.70h23M129.8 481.30h28" stroke="#4d4d4d" stroke-width="0.9" stroke-dasharray="3.200 .500 2.100 .400 4.300 .500 1.700 .400" fill="none"/>
<path d="M129.8 490.80h49M129.8 493.40h28" stroke="#4d4d4d" stroke-width="0.9" stroke-dasharray="3.200 .500 2.100 .400 4.300 .500 1.700 .400" fill="none"/>
<path d="M129.8 503.30h23M129.8 505.90h29.7" stroke="#4d4d4d" stroke-width="0.9" stroke-dasharray="3.200 .500 2.100 .400 4.300 .500 1.700 .400" fill="none"/>
<path d="M129 484.800h106.500M129 497.200h106.500M129 509.500h106.500" stroke="#696969" stroke-width=".5"/>
<circle cx="193.6" cy="479.5" r="3.7" fill="#2a2420"/><circle cx="193.6" cy="479.2" r="2.6" fill="#a5642c"/><path d="M192.0 479.9h3.200v2.9h-3.200z" fill="#241c18"/><circle cx="193.6" cy="479.0" r=".9" fill="#5a3214"/>
<circle cx="206.9" cy="479.5" r="3.7" fill="#2a2420"/><circle cx="206.9" cy="479.2" r="2.6" fill="#a5642c"/><path d="M205.3 479.9h3.200v2.9h-3.200z" fill="#241c18"/><circle cx="206.9" cy="479.0" r=".9" fill="#5a3214"/>
<circle cx="193.8" cy="491.3" r="4.0" fill="#2a2420"/><circle cx="193.8" cy="491.0" r="2.9" fill="#a5642c"/><path d="M192.2 491.7h3.200v3.2h-3.200z" fill="#241c18"/><circle cx="193.8" cy="490.8" r=".9" fill="#5a3214"/>
<rect x="204.300" y="500.300" width="6.600" height="6.800" rx=".8" fill="#7e7e7e"/><circle cx="207.600" cy="503.700" r="1.600" fill="#161616"/>
<path d="M127 557.800h2.500" stroke="#2c2c2c" stroke-width="1.100"/><path d="M132.500 557.800h11.200" stroke="#676767" stroke-width=".9" stroke-dasharray="3 .600"/>
</g>
<g>
<path d="M129 628.300h1.400M131.300 628.300h1.400M133.600 628.300h1.400M135.900 628.300h1.400M138.200 628.300h.8" stroke="#3a3a3a" stroke-width="1.300"/><circle cx="141.700" cy="628.300" r="1.100" fill="#2f5590"/>
<path d="M129 630.600h106.600" stroke="#626262" stroke-width=".5"/>
<rect x="129" y="632.700" width="5.900" height="6.200" fill="#9c6a3a"/><rect x="130" y="633.700" width="3.900" height="4" fill="#ad8254" opacity=".55"/>
<rect x="136" y="632.700" width="6" height="6.200" fill="#94591f"/><rect x="137" y="633.500" width="4" height="2.200" fill="#c8b09a" opacity=".7"/>
<rect x="143" y="632.700" width="6" height="6.200" fill="#9c6a3a"/><rect x="144" y="633.700" width="4" height="4" fill="#ad8254" opacity=".55"/>
<rect x="150" y="632.700" width="6" height="6.200" fill="#1d335c"/><rect x="151.200" y="633.500" width="1.200" height="2.500" fill="#aab4c8"/><rect x="153.600" y="633.500" width="1.200" height="2.500" fill="#aab4c8"/><rect x="151" y="636.800" width="4" height="1.300" fill="#5a70a0"/>
<path d="M130 657.6h16" stroke="#2a2a2a" stroke-width="1.500" stroke-dasharray="7 .500 5 .500 3"/>
<path d="M157.0 657.0h5.2M156.4 659.2h6.4M168.4 657.0h6.6M167.8 659.2h7.8M181.0 657.0h6.2M180.4 659.2h7.4M194.2 657.0h4.6M193.6 659.2h5.8" stroke="#33507f" stroke-width=".9"/>
<path d="M129.500 660.4h72.500" stroke="#5e5e5e" stroke-width=".5"/>
<path d="M153.4 656.4V671.0M165.5 656.4V671.0M178 656.4V671.0M190.5 656.4V671.0" stroke="#676767" stroke-width=".4"/>
<path d="M130 662.0h3.5" stroke="#505050" stroke-width=".9" stroke-dasharray="4 .500 6 .500 3 .500"/>
<path d="M130 664.4h7" stroke="#505050" stroke-width=".9" stroke-dasharray="4 .500 6 .500 3 .500"/>
<rect x="159.2" y="663.9" width=".8" height="1" fill="#3a3a3a"/>
<rect x="171.3" y="663.9" width=".8" height="1" fill="#3a3a3a"/>
<path d="M130 667.0h15.5" stroke="#505050" stroke-width=".9" stroke-dasharray="4 .500 6 .500 3 .500"/>
<rect x="159.2" y="666.5" width=".8" height="1" fill="#3a3a3a"/>
<rect x="171.3" y="666.5" width=".8" height="1" fill="#3a3a3a"/>
<rect x="183.7" y="666.5" width=".8" height="1" fill="#3a3a3a"/>
<path d="M130 669.4h13.5" stroke="#505050" stroke-width=".9" stroke-dasharray="4 .500 6 .500 3 .500"/>
<rect x="196.1" y="668.9" width=".8" height="1" fill="#3a3a3a"/>
<path d="M129.500 671.0h72.500" stroke="#696969" stroke-width=".4"/>
<path d="M130 679.2h18" stroke="#2a2a2a" stroke-width="1.500" stroke-dasharray="7 .500 5 .500 3"/>
<path d="M157.0 678.7h5.2M156.4 680.9h6.4M168.4 678.7h6.6M167.8 680.9h7.8M181.0 678.7h6.2M180.4 680.9h7.4M194.2 678.7h4.6M193.6 680.9h5.8" stroke="#33507f" stroke-width=".9"/>
<path d="M129.500 682.1h72.500" stroke="#5e5e5e" stroke-width=".5"/>
<path d="M153.4 678.1V711.9M165.5 678.1V711.9M178 678.1V711.9M190.5 678.1V711.9" stroke="#676767" stroke-width=".4"/>
<path d="M130 683.4h18" stroke="#505050" stroke-width=".9" stroke-dasharray="4 .500 6 .500 3 .500"/>
<path d="M130 685.5h21.5" stroke="#505050" stroke-width=".9" stroke-dasharray="5 .500 3 .500"/>
<rect x="183.7" y="683.9" width=".8" height="1" fill="#3a3a3a"/>
<path d="M130 688.3h18" stroke="#505050" stroke-width=".9" stroke-dasharray="4 .500 6 .500 3 .500"/>
<rect x="159.2" y="687.8" width=".8" height="1" fill="#3a3a3a"/>
<rect x="171.3" y="687.8" width=".8" height="1" fill="#3a3a3a"/>
<rect x="196.1" y="687.8" width=".8" height="1" fill="#3a3a3a"/>
<path d="M130 690.9h18" stroke="#505050" stroke-width=".9" stroke-dasharray="4 .500 6 .500 3 .500"/>
<rect x="183.7" y="690.4" width=".8" height="1" fill="#3a3a3a"/>
<path d="M130 693.4h17" stroke="#505050" stroke-width=".9" stroke-dasharray="4 .500 6 .500 3 .500"/>
<path d="M130 695.5h23.5" stroke="#505050" stroke-width=".9" stroke-dasharray="5 .500 3 .500"/>
<rect x="159.2" y="693.9" width=".8" height="1" fill="#3a3a3a"/>
<rect x="171.3" y="693.9" width=".8" height="1" fill="#3a3a3a"/>
<rect x="183.7" y="693.9" width=".8" height="1" fill="#3a3a3a"/>
<rect x="196.1" y="693.9" width=".8" height="1" fill="#3a3a3a"/>
<path d="M130 697.8h12" stroke="#505050" stroke-width=".9" stroke-dasharray="4 .500 6 .500 3 .500"/>
<path d="M130 699.8h22" stroke="#505050" stroke-width=".9" stroke-dasharray="4 .500 6 .500 3 .500"/>
<path d="M130 701.9h16" stroke="#505050" stroke-width=".9" stroke-dasharray="5 .500 3 .500"/>
<rect x="171.3" y="700.3" width=".8" height="1" fill="#3a3a3a"/>
<rect x="183.7" y="700.3" width=".8" height="1" fill="#3a3a3a"/>
<path d="M130 704.3h18.5" stroke="#505050" stroke-width=".9" stroke-dasharray="4 .500 6 .500 3 .500"/>
<path d="M130 706.4h7.5" stroke="#505050" stroke-width=".9" stroke-dasharray="5 .500 3 .500"/>
<rect x="183.7" y="704.8" width=".8" height="1" fill="#3a3a3a"/>
<path d="M130 708.9h20" stroke="#505050" stroke-width=".9" stroke-dasharray="4 .500 6 .500 3 .500"/>
<path d="M130 711.0h7.5" stroke="#505050" stroke-width=".9" stroke-dasharray="5 .500 3 .500"/>
<rect x="183.7" y="709.4" width=".8" height="1" fill="#3a3a3a"/>
<path d="M129.500 711.9h72.500" stroke="#696969" stroke-width=".4"/>
<path d="M130 720.4h17" stroke="#2a2a2a" stroke-width="1.500" stroke-dasharray="7 .500 5 .500 3"/>
<path d="M157.0 719.9h5.2M156.4 722.1h6.4M168.4 719.9h6.6M167.8 722.1h7.8M181.0 719.9h6.2M180.4 722.1h7.4M194.2 719.9h4.6M193.6 722.1h5.8" stroke="#33507f" stroke-width=".9"/>
<path d="M129.500 723.3h72.500" stroke="#5e5e5e" stroke-width=".5"/>
<path d="M153.4 719.3V757.8M165.5 719.3V757.8M178 719.3V757.8M190.5 719.3V757.8" stroke="#676767" stroke-width=".4"/>
<path d="M130 724.9h20" stroke="#505050" stroke-width=".9" stroke-dasharray="4 .500 6 .500 3 .500"/>
<rect x="159.2" y="724.4" width=".8" height="1" fill="#3a3a3a"/>
<rect x="171.3" y="724.4" width=".8" height="1" fill="#3a3a3a"/>
<rect x="183.7" y="724.4" width=".8" height="1" fill="#3a3a3a"/>
<rect x="196.1" y="724.4" width=".8" height="1" fill="#3a3a3a"/>
<path d="M130 727.3h18" stroke="#505050" stroke-width=".9" stroke-dasharray="4 .500 6 .500 3 .500"/>
<rect x="159.2" y="726.8" width=".8" height="1" fill="#3a3a3a"/>
<rect x="171.3" y="726.8" width=".8" height="1" fill="#3a3a3a"/>
<rect x="183.7" y="726.8" width=".8" height="1" fill="#3a3a3a"/>
<rect x="196.1" y="726.8" width=".8" height="1" fill="#3a3a3a"/>
<path d="M130 729.7h17" stroke="#505050" stroke-width=".9" stroke-dasharray="4 .500 6 .500 3 .500"/>
<rect x="159.2" y="729.2" width=".8" height="1" fill="#3a3a3a"/>
<rect x="171.3" y="729.2" width=".8" height="1" fill="#3a3a3a"/>
<rect x="183.7" y="729.2" width=".8" height="1" fill="#3a3a3a"/>
<path d="M130 732.1h14" stroke="#505050" stroke-width=".9" stroke-dasharray="4 .500 6 .500 3 .500"/>
<rect x="159.2" y="731.6" width=".8" height="1" fill="#3a3a3a"/>
<rect x="171.3" y="731.6" width=".8" height="1" fill="#3a3a3a"/>
<rect x="183.7" y="731.6" width=".8" height="1" fill="#3a3a3a"/>
<path d="M130 736.0h8" stroke="#505050" stroke-width=".9" stroke-dasharray="4 .500 6 .500 3 .500"/>
<rect x="159.2" y="735.5" width=".8" height="1" fill="#3a3a3a"/>
<rect x="171.3" y="735.5" width=".8" height="1" fill="#3a3a3a"/>
<rect x="183.7" y="735.5" width=".8" height="1" fill="#3a3a3a"/>
<rect x="196.1" y="735.5" width=".8" height="1" fill="#3a3a3a"/>
<path d="M130 739.5h10" stroke="#505050" stroke-width=".9" stroke-dasharray="4 .500 6 .500 3 .500"/>
<rect x="159.2" y="739.0" width=".8" height="1" fill="#3a3a3a"/>
<rect x="171.3" y="739.0" width=".8" height="1" fill="#3a3a3a"/>
<rect x="183.7" y="739.0" width=".8" height="1" fill="#3a3a3a"/>
<rect x="196.1" y="739.0" width=".8" height="1" fill="#3a3a3a"/>
<path d="M130 741.9h17" stroke="#505050" stroke-width=".9" stroke-dasharray="4 .500 6 .500 3 .500"/>
<rect x="159.2" y="741.4" width=".8" height="1" fill="#3a3a3a"/>
<rect x="171.3" y="741.4" width=".8" height="1" fill="#3a3a3a"/>
<rect x="183.7" y="741.4" width=".8" height="1" fill="#3a3a3a"/>
<rect x="196.1" y="741.4" width=".8" height="1" fill="#3a3a3a"/>
<path d="M130 744.3h15" stroke="#505050" stroke-width=".9" stroke-dasharray="4 .500 6 .500 3 .500"/>
<rect x="159.2" y="743.8" width=".8" height="1" fill="#3a3a3a"/>
<rect x="171.3" y="743.8" width=".8" height="1" fill="#3a3a3a"/>
<rect x="183.7" y="743.8" width=".8" height="1" fill="#3a3a3a"/>
<rect x="196.1" y="743.8" width=".8" height="1" fill="#3a3a3a"/>
<path d="M130 746.7h13" stroke="#505050" stroke-width=".9" stroke-dasharray="4 .500 6 .500 3 .500"/>
<path d="M130 748.8h6.5" stroke="#505050" stroke-width=".9" stroke-dasharray="5 .500 3 .500"/>
<rect x="159.2" y="747.2" width=".8" height="1" fill="#3a3a3a"/>
<rect x="171.3" y="747.2" width=".8" height="1" fill="#3a3a3a"/>
<rect x="183.7" y="747.2" width=".8" height="1" fill="#3a3a3a"/>
<rect x="196.1" y="747.2" width=".8" height="1" fill="#3a3a3a"/>
<path d="M130 751.4h8" stroke="#505050" stroke-width=".9" stroke-dasharray="4 .500 6 .500 3 .500"/>
<rect x="159.2" y="750.9" width=".8" height="1" fill="#3a3a3a"/>
<rect x="171.3" y="750.9" width=".8" height="1" fill="#3a3a3a"/>
<rect x="183.7" y="750.9" width=".8" height="1" fill="#3a3a3a"/>
<rect x="196.1" y="750.9" width=".8" height="1" fill="#3a3a3a"/>
<path d="M130 753.8h17" stroke="#505050" stroke-width=".9" stroke-dasharray="4 .500 6 .500 3 .500"/>
<rect x="171.3" y="753.3" width=".8" height="1" fill="#3a3a3a"/>
<rect x="196.1" y="753.3" width=".8" height="1" fill="#3a3a3a"/>
<path d="M130 756.2h14" stroke="#505050" stroke-width=".9" stroke-dasharray="4 .500 6 .500 3 .500"/>
<rect x="196.1" y="755.7" width=".8" height="1" fill="#3a3a3a"/>
<path d="M129.500 757.8h72.500" stroke="#696969" stroke-width=".4"/>
<path d="M130 767.5h11" stroke="#2a2a2a" stroke-width="1.500" stroke-dasharray="7 .500 5 .500 3"/>
<path d="M130 771.3h16.5" stroke="#2a2a2a" stroke-width="1.500"/>
<path d="M157.0 769.1h5.2M156.4 771.3h6.4M168.4 769.1h6.6M167.8 771.3h7.8M181.0 769.1h6.2M180.4 771.3h7.4M194.2 769.1h4.6M193.6 771.3h5.8" stroke="#33507f" stroke-width=".9"/>
<path d="M129.500 772.5h72.500" stroke="#5e5e5e" stroke-width=".5"/>
<path d="M153.4 768.5V779.4M165.5 768.5V779.4M178 768.5V779.4M190.5 768.5V779.4" stroke="#676767" stroke-width=".4"/>
<path d="M130 775.4h7" stroke="#505050" stroke-width=".9" stroke-dasharray="4 .500 6 .500 3 .500"/>
<rect x="159.2" y="774.9" width=".8" height="1" fill="#3a3a3a"/>
<rect x="171.3" y="774.9" width=".8" height="1" fill="#3a3a3a"/>
<rect x="183.7" y="774.9" width=".8" height="1" fill="#3a3a3a"/>
<rect x="196.1" y="774.9" width=".8" height="1" fill="#3a3a3a"/>
<path d="M130 777.8h7" stroke="#505050" stroke-width=".9" stroke-dasharray="4 .500 6 .500 3 .500"/>
<rect x="159.2" y="777.3" width=".8" height="1" fill="#3a3a3a"/>
<rect x="171.3" y="777.3" width=".8" height="1" fill="#3a3a3a"/>
<rect x="183.7" y="777.3" width=".8" height="1" fill="#3a3a3a"/>
<rect x="196.1" y="777.3" width=".8" height="1" fill="#3a3a3a"/>
<path d="M129.500 779.4h72.500" stroke="#696969" stroke-width=".4"/>
<path d="M138.500 775.400h8.500M138.500 777.800h8.500" stroke="#444" stroke-width="1" stroke-dasharray="4 .500"/>
<path d="M133 773.600h3M141.500 773.600h3" stroke="#2b4a82" stroke-width="1"/>
<path d="M243.300 700.800v17.200" stroke="#7c7c7c" stroke-width=".5"/>
<path d="M221 798h10.500" stroke="#676767" stroke-width=".9" stroke-dasharray="3 .600"/><path d="M235.400 798h3" stroke="#2c2c2c" stroke-width="1.100"/>
</g>
</svg>
<!-- ===== right panels ===== -->
<div class="a" style="left:1174.300px;top:121.500px;width:271.700px;height:691px;background:#1c1d1d"></div>
<!-- colour panel -->
<div class="a" style="left:1174.300px;top:121.500px;width:271.700px;height:222.300px;background:#282929"></div>
<div class="a" style="left:1174.300px;top:121.500px;width:271.700px;height:18.300px;background:#1d1e1e"></div>
<div class="tab" style="left:1193px;top:120.700px;width:36.200px;height:20px"></div>
<div class="a" style="left:1181.200px;top:126.300px;width:1px;height:7px;background:#2e2f2f"></div><div class="a" style="left:1184.200px;top:126.300px;width:1px;height:7px;background:#2e2f2f"></div>
<div class="t" style="left:1195.600px;top:126px;color:#8d8d8d;font-size:10px;letter-spacing:.12px;-webkit-text-stroke:0.30px #8d8d8d">Colour</div>
<div class="t" style="left:1234.600px;top:126px;color:#464747;font-size:10px;letter-spacing:.1px">Swatches</div>
<div class="t" style="left:1287.400px;top:126px;color:#464747;font-size:10px;letter-spacing:.1px">Stroke</div>
<div class="a" style="left:1283.300px;top:124px;width:1px;height:10px;background:#2c2d2d"></div>
<div class="a" style="left:1323.800px;top:152.900px;width:18.800px;height:20.600px;background:#212222;border-radius:2px"></div>
<div class="a" style="left:1346px;top:154.500px;width:89.200px;height:18.100px;background:#242525;border:1px solid #2e2f2f;border-radius:3px"></div>
<div class="t" style="left:1351.400px;top:159px;color:#6e6f6f;font-size:9.500px;letter-spacing:-.35px">RGB</div>
<div class="t" style="left:1181.800px;top:196px;color:#6e6f6f;font-size:9.500px">R</div>
<div class="t" style="left:1181.500px;top:216px;color:#6e6f6f;font-size:9.500px">G</div>
<div class="t" style="left:1181.800px;top:237px;color:#6e6f6f;font-size:9.500px">B</div>
<!-- sliders -->
<div class="a" style="left:1193.900px;top:197.300px;width:206.200px;height:8.500px;border-radius:4.500px;background:#1b1c1c"></div>
<div class="a" style="left:1194.600px;top:198px;width:204.800px;height:7.100px;border-radius:4px;background:linear-gradient(90deg,#3f5f67 0%,#6a6c6c 88%,#776f6f 100%)"></div>
<div class="a" style="left:1193.900px;top:217.800px;width:206.200px;height:8.500px;border-radius:4.500px;background:#1b1c1c"></div>
<div class="a" style="left:1194.600px;top:218.500px;width:204.800px;height:7.100px;border-radius:4px;background:linear-gradient(90deg,#5f335e 0%,#6b686b 88%,#6d7371 100%)"></div>
<div class="a" style="left:1193.900px;top:238.200px;width:206.200px;height:8.500px;border-radius:4.500px;background:#1b1c1c"></div>
<div class="a" style="left:1194.600px;top:238.900px;width:204.800px;height:7.100px;border-radius:4px;background:linear-gradient(90deg,#72722c 0%,#6c6c6a 88%,#6b6b74 100%)"></div>
<div class="a" style="left:1404.300px;top:191.600px;width:34.600px;height:18.200px;background:#212222;border-radius:3px"></div>
<div class="a" style="left:1404.300px;top:212.100px;width:34.600px;height:17.900px;background:#212222;border-radius:3px"></div>
<div class="a" style="left:1404.300px;top:232.500px;width:34.600px;height:17.700px;background:#212222;border-radius:3px"></div>
<div class="t" style="left:1407.600px;top:197px;color:#6e6f6f;font-size:10px;letter-spacing:.3px">235</div>
<div class="t" style="left:1407.600px;top:217px;color:#6e6f6f;font-size:10px;letter-spacing:.3px">235</div>
<div class="t" style="left:1407.600px;top:237px;color:#6e6f6f;font-size:10px;letter-spacing:.3px">235</div>
<!-- spectrum -->
<div class="a" style="left:1181.600px;top:256px;width:256.500px;height:45.400px;background:#0a0a0a"></div>
<div class="a" style="left:1182.400px;top:256.800px;width:254.900px;height:43.800px;background:linear-gradient(180deg,rgba(136,136,136,1) 0%,rgba(134,134,134,.88) 8%,rgba(120,120,120,0) 55%,rgba(0,0,0,0) 55%,rgba(8,8,8,.72) 84%,#0a0a0a 100%),linear-gradient(90deg,#7a2a22 0%,#7c5a26 9%,#7a782c 16.500%,#4a6a22 27%,#2e5a26 36%,#2c6444 44%,#2a6880 53%,#1f3068 60%,#1a1f4a 68%,#30205a 77%,#6a2868 87%,#7a2a44 94%,#7c2a22 100%)"></div>
<div class="t" style="left:1181.700px;top:307px;color:#6e6f6f;font-size:10px;letter-spacing:.32px">Opacity</div>
<div class="a" style="left:1183.300px;top:322px;width:11.600px;height:11.600px;border-radius:50%;background:#6b6b6b"></div>
<!-- opacity track -->
<div class="a" style="left:1201.800px;top:323.300px;width:168px;height:8.800px;border-radius:4.500px;background:#1b1c1c"></div>
<div class="a" style="left:1202.500px;top:324px;width:166.600px;height:7.400px;border-radius:4px;background:linear-gradient(90deg,rgba(40,40,40,0) 0%,rgba(34,35,35,.55) 55%,rgba(30,31,31,.96) 100%),conic-gradient(#747474 25%,#4c4c4c 0 50%,#747474 0 75%,#4c4c4c 0) 0 0/7.400px 7.400px"></div>
<div class="a" style="left:1382px;top:317.700px;width:58.300px;height:18.900px;background:#1f2020;border-radius:3px;box-shadow:0 .8px 0 rgba(255,255,255,.04)"></div>
<div class="a" style="left:1425px;top:318.200px;width:14.800px;height:17.900px;background:#252626;border-radius:0 3px 3px 0"></div>
<div class="t" style="left:1388.700px;top:323px;color:#7a7b7b;font-size:10px;letter-spacing:.05px">100 %</div>
<!-- layers panel -->
<div class="a" style="left:1174.300px;top:343.800px;width:271.700px;height:3.300px;background:#242525"></div><div class="a" style="left:1174.300px;top:347px;width:271.700px;height:19.400px;background:#1d1e1e"></div>
<div class="tab" style="left:1192.800px;top:347.200px;width:36.400px;height:20px"></div>
<div class="a" style="left:1174.300px;top:366.300px;width:271.700px;height:29px;background:#282929"></div>
<div class="a" style="left:1174.300px;top:395.300px;width:271.700px;height:275.700px;background:#1e1f1f"></div>
<div class="a" style="left:1431.700px;top:395.300px;width:14.300px;height:275.700px;background:#212222"></div>
<div class="a" style="left:1174.300px;top:395.400px;width:257.200px;height:30.700px;background:#2e3a4e"></div>
<div class="a" style="left:1174.300px;top:670.800px;width:271.700px;height:21.500px;background:#262727"></div>
<div class="a" style="left:1178.800px;top:672px;width:20.200px;height:18.400px;background:#222323;border-radius:2px"></div>
<div class="a" style="left:1181.200px;top:352.800px;width:1px;height:7px;background:#2e2f2f"></div><div class="a" style="left:1184.200px;top:352.800px;width:1px;height:7px;background:#2e2f2f"></div>
<div class="t" style="left:1195.600px;top:352px;color:#8d8d8d;font-size:10px;letter-spacing:-.05px;-webkit-text-stroke:0.30px #8d8d8d">Layers</div>
<div class="t" style="left:1234.500px;top:352px;color:#464747;font-size:10px;letter-spacing:.1px">Character</div>
<div class="t" style="left:1288.600px;top:352px;color:#464747;font-size:10px;letter-spacing:.1px">Paragraph</div>
<div class="t" style="left:1344.600px;top:352px;color:#464747;font-size:10px;letter-spacing:.2px">Text Styles</div>
<div class="a" style="left:1284.100px;top:351px;width:1px;height:10px;background:#2c2d2d"></div>
<div class="a" style="left:1340px;top:351px;width:1px;height:10px;background:#2c2d2d"></div>
<div class="t" style="left:1179.300px;top:376px;color:#707171;font-size:10px;letter-spacing:.15px">Opacity:</div>
<div class="a" style="left:1232.700px;top:371.700px;width:46.700px;height:19.300px;background:#1f2020;border-radius:3px"></div>
<div class="t" style="left:1235.100px;top:378px;color:#8a8a8a;font-size:10px;letter-spacing:.05px">100 %</div>
<div class="a" style="left:1282.200px;top:371.800px;width:120.800px;height:18.500px;background:#252626;border:1px solid #2f3030;border-radius:3px"></div>
<div class="t" style="left:1286.600px;top:377px;color:#808080;font-size:10px;letter-spacing:.1px">Normal</div>
<div class="t" style="left:1229.200px;top:406px;color:#46566c;font-size:10px;letter-spacing:.25px" id="lyt">(Black &amp; White Adjustment)</div>
<div class="a" style="left:1194.400px;top:396.200px;width:29.600px;height:29.100px;background:#1f2733;border-radius:2px"></div>
<div class="a" style="left:1195.600px;top:397.400px;width:27.200px;height:26.700px;background:#707070;border-radius:1px"></div>
<div class="a" style="left:1401.500px;top:404.300px;width:12.300px;height:12.500px;background:#2a2b2b;border:1px solid #222;border-radius:2.500px"></div>
<!-- transform panel -->
<div class="a" style="left:1174.300px;top:692.300px;width:271.700px;height:3.800px;background:#242525"></div><div class="a" style="left:1174.300px;top:696px;width:271.700px;height:19.700px;background:#1d1e1e"></div>
<div class="tab" style="left:1193.200px;top:695.600px;width:52.600px;height:20.400px"></div>
<div class="a" style="left:1174.300px;top:715.800px;width:271.700px;height:96.600px;background:#272828"></div>
<div class="a" style="left:1174.300px;top:812.400px;width:271.700px;height:20px;background:#222323"></div>
<div class="a" style="left:1181.200px;top:702.100px;width:1px;height:7px;background:#2e2f2f"></div><div class="a" style="left:1184.200px;top:702.100px;width:1px;height:7px;background:#2e2f2f"></div>
<div class="t" style="left:1195.700px;top:701px;color:#888888;font-size:10px;letter-spacing:.15px;-webkit-text-stroke:0.25px #888888">Transform</div>
<div class="t" style="left:1250.600px;top:701px;color:#464747;font-size:10px;letter-spacing:.15px">Navigator</div>
<div class="t" style="left:1303.800px;top:701px;color:#464747;font-size:10px;letter-spacing:.25px">History</div>
<div class="a" style="left:1299.200px;top:700px;width:1px;height:10px;background:#2c2d2d"></div>
<!-- fields -->
<div class="a" style="left:1258.200px;top:725.700px;width:58.200px;height:17.600px;background:#1f2020;border-radius:3px"></div>
<div class="a" style="left:1258.200px;top:746.800px;width:58.200px;height:17.800px;background:#1f2020;border-radius:3px"></div>
<div class="a" style="left:1258.200px;top:778px;width:58.200px;height:17.900px;background:#1f2020;border-radius:3px"></div>
<div class="a" style="left:1339.600px;top:725.700px;width:58.200px;height:17.600px;background:#1f2020;border-radius:3px"></div>
<div class="a" style="left:1339.600px;top:746.800px;width:58.200px;height:17.800px;background:#1f2020;border-radius:3px"></div>
<div class="a" style="left:1339.600px;top:778px;width:58.200px;height:17.900px;background:#1f2020;border-radius:3px"></div>
<div class="t" style="left:1246.200px;top:731px;color:#7e7e7e;font-size:10px;-webkit-text-stroke:0.30px #7e7e7e">X:</div>
<div class="t" style="left:1246.200px;top:752px;color:#7e7e7e;font-size:10px;-webkit-text-stroke:0.30px #7e7e7e">Y:</div>
<div class="t" style="left:1246.200px;top:783px;color:#7e7e7e;font-size:10px;-webkit-text-stroke:0.30px #7e7e7e">R:</div>
<div class="t" style="left:1324.700px;top:731px;color:#7e7e7e;font-size:10px;-webkit-text-stroke:0.30px #7e7e7e">W:</div>
<div class="t" style="left:1326.500px;top:752px;color:#7e7e7e;font-size:10px;-webkit-text-stroke:0.30px #7e7e7e">H:</div>
<div class="t" style="left:1327.300px;top:783px;color:#7e7e7e;font-size:10px;-webkit-text-stroke:0.30px #7e7e7e">S:</div>
<div class="t" style="left:1262px;top:731px;color:#474848;font-size:10px;letter-spacing:.3px">0 pt</div>
<div class="t" style="left:1262px;top:752px;color:#474848;font-size:10px;letter-spacing:.3px">0 pt</div>
<div class="t" style="left:1262px;top:783px;color:#474848;font-size:10px;letter-spacing:.3px">0 °</div>
<div class="t" style="left:1343.400px;top:731px;color:#474848;font-size:10px;letter-spacing:.3px">0 pt</div>
<div class="t" style="left:1343.400px;top:752px;color:#474848;font-size:10px;letter-spacing:.3px">0 pt</div>
<div class="t" style="left:1343.400px;top:783px;color:#474848;font-size:10px;letter-spacing:.3px">0 °</div>
<!-- anchor widget -->
<div class="a" style="left:1193.400px;top:736.600px;width:32.800px;height:32.800px;background:#343535"></div>
<svg width="1500" height="904" viewBox="0 0 1500 904">
<use href="#pm" x="1159.600" y="-.3"/><use href="#pm" x="1159.600" y="225.400"/>
<!-- stroke ring -->
<circle cx="1196.300" cy="161" r="12.700" fill="#343535"/><circle cx="1196.300" cy="161" r="9.400" fill="none" stroke="#0d0d0d" stroke-width="5.200"/><circle cx="1196.300" cy="161" r="6.800" fill="#363737"/><circle cx="1196.300" cy="161" r="6.200" fill="#2b2c2c"/>
<circle cx="1206.300" cy="171" r="12.300" fill="#1d1e1e"/><circle cx="1206.300" cy="171" r="11.400" fill="#757575"/>
<circle cx="1187.300" cy="180.300" r="5.300" fill="#1b1c1c"/><circle cx="1187.300" cy="180.300" r="4.400" fill="#989898"/><path d="M1184.300 183.300l6.200-6.200" stroke="#a42f2f" stroke-width="1.200"/>
<!-- swap arrows -->
<g fill="none" stroke="#6b6c6c" stroke-width="1.250" stroke-linecap="round" stroke-linejoin="round"><path d="M1210.800 149.300c4.400.2 7.200 3 7.400 7.400"/><path d="M1213 147l-2.400 2.300 2.400 2.300M1215.800 154.600l2.400 2.300 2.300-2.400"/></g>
<!-- dropper -->
<g transform="translate(1235.400 157.700) rotate(45) scale(1.120)"><rect x="-2.500" y="-10.600" width="5" height="5.400" rx="2.200" fill="#86672f"/><rect x="-3" y="-6" width="6" height="2.200" rx=".6" fill="#6a5026"/><path d="M-1.700-3.800h3.400v7.600l-1.700 4.600-1.700-4.600z" fill="#666767"/><path d="M-1.700-3.800h1.200v9.800l-1.200-2z" fill="#8e8e8e"/></g>
<circle cx="1254" cy="156" r="7.300" fill="#323333"/><circle cx="1254" cy="156" r="6.400" fill="#0c0c0c"/>
<!-- lock -->
<g id="lk"><rect x="1329.300" y="162" width="7.600" height="6.800" rx=".8" fill="#6a6b6b"/><path d="M1330.900 162v-2.200a2.200 2.200 0 0 1 4.400 0v2.200" fill="none" stroke="#6a6b6b" stroke-width="1.100"/></g>
<!-- select arrows -->
<g id="ud" fill="#5e5f5f"><path d="M1425 161.600h4l-2-2.800z"/><path d="M1425 165h4l-2 2.800z"/></g>
<use href="#ud" x="-31.900" y="217.700"/>
<!-- slider thumbs -->
<g id="th" fill="none"><circle cx="1379.200" cy="201.500" r="4.700" fill="#5a5a5a" fill-opacity=".5" stroke="#2a2a2a" stroke-width="2.200"/><circle cx="1379.200" cy="201.500" r="4.700" stroke="#a8a8a8" stroke-width="1"/><circle cx="1379.200" cy="201.500" r="2.400" stroke="#a8a8a8" stroke-width="1"/></g>
<use href="#th" y="20.500"/><use href="#th" y="40.900"/>
<!-- opacity thumb -->
<circle cx="1367.200" cy="327.400" r="4.500" fill="#1c1d1d" stroke="#cdcdcd" stroke-width="1.300"/>
<path d="M1429.600 325.600h6.200l-3.100 4.800z" fill="#7a7b7b"/>
<path d="M1270.800 379.600h5.200l-2.600 4z" fill="#6e6f6f"/>
<!-- gear -->
<g transform="translate(1412.800 381.200)" fill="#666767"><circle r="4.300"/><g id="gt"><rect x="-1.300" y="-6.300" width="2.600" height="12.600" rx=".4"/></g><use href="#gt" transform="rotate(45)"/><use href="#gt" transform="rotate(90)"/><use href="#gt" transform="rotate(135)"/><circle r="1.900" fill="#282929"/></g>
<use href="#lk" x="98.800" y="217.600" opacity=".7"/>
<!-- layer adjustment icon -->
<circle cx="1214.500" cy="416.500" r="6.300" fill="#1a1a1a"/><path d="M1218.100 412.900a5.100 5.100 0 0 1-7.200 7.200z" fill="#8a8a8a"/>
<path d="M1404.400 410.600l2.600 3 4.400-6.400" fill="none" stroke="#c4c4c4" stroke-width="1.300"/>
<!-- layers toolbar icons -->
<path d="M1180.800 675.800h16l-8 4.200z" fill="#5f6060"/><g fill="none" stroke="#5f6060" stroke-width="1.700"><path d="M1181.200 679.600l7.600 3.800 7.600-3.800M1181.200 683.200l7.600 3.800 7.600-3.800"/></g>
<rect x="1271" y="676" width="13.600" height="11.400" fill="#565757"/><circle cx="1277.800" cy="681.600" r="3.900" fill="#222323"/>
<circle cx="1299.900" cy="681.600" r="5.500" fill="none" stroke="#5e5f5f" stroke-width="1"/><path d="M1303.800 677.700a5.500 5.500 0 0 1-7.800 7.800z" fill="#5e5f5f"/>
<g fill="none" stroke="#444545" stroke-width=".9"><path d="M1406.600 676.500h5.400l3.600 3.600v7h-9zM1412 676.500v3.600h3.600"/></g>
<g fill="#444545"><rect x="1428.400" y="677" width="8.800" height="1.300"/><rect x="1431" y="675.200" width="3.600" height="1.600"/><path d="M1429.200 679h7.200l-.5 8.200h-6.200zM1430.700 680.200v6h.8v-6zM1432.400 680.200v6h.8v-6zM1434.100 680.200v6h.8v-6z" fill-rule="evenodd"/></g>
<!-- link -->
<g fill="none" stroke="#5a5b5b" stroke-width=".9"><circle cx="1410" cy="742" r="1.900"/><circle cx="1410" cy="749.400" r="1.900"/><path d="M1410 744v3.400"/></g>
<path d="M1305.600 785h5l-2.500 3.800z" fill="#4a4b4b"/><path d="M1387 785h5l-2.500 3.800z" fill="#4a4b4b"/>
<!-- anchor dots -->
<g fill="#2b2c2c"><rect x="1190.8" y="734.0" width="5.200" height="5.200"/><rect x="1207.2" y="734.0" width="5.200" height="5.200"/><rect x="1223.6" y="734.0" width="5.200" height="5.200"/><rect x="1190.8" y="750.4" width="5.200" height="5.200"/><rect x="1207.2" y="750.4" width="5.200" height="5.200" fill="#232424"/><rect x="1223.6" y="750.4" width="5.200" height="5.200"/><rect x="1190.8" y="766.8" width="5.200" height="5.200"/><rect x="1207.2" y="766.8" width="5.200" height="5.200"/><rect x="1223.6" y="766.8" width="5.200" height="5.200"/></g>
</svg>
<div class="t" style="left:1314.200px;top:673.600px;font-family:'Liberation Serif',serif;font-style:italic;font-size:15px;line-height:16px;height:16px;color:#5e5f5f;letter-spacing:.6px">fx</div>
<!-- ===== status bar ===== -->
<div class="a" style="left:54px;top:812px;width:1120.500px;height:20px;background:#232424"></div>
<div class="t" style="left:125px;top:818px;color:#6f7070;font-size:10px;letter-spacing:.2px">Master A</div>
<div class="t" style="left:281.5px;top:818px;color:#626363;font-size:10px;letter-spacing:0.288px">'Black &amp; White Adjustment' selected.</div>
<div class="t" style="left:456.5px;top:818px;color:#8c8c8c;font-weight:bold;font-size:10px;letter-spacing:0.126px">Drag</div>
<div class="t" style="left:482.6px;top:818px;color:#626363;font-size:10px;letter-spacing:0.227px">to move selection.</div>
<div class="t" style="left:570.8px;top:818px;color:#8c8c8c;font-weight:bold;font-size:10px;letter-spacing:0.019px">Click</div>
<div class="t" style="left:598.4px;top:818px;color:#626363;font-size:10px;letter-spacing:0.308px">another object to select it.</div>
<div class="t" style="left:724.7px;top:818px;color:#8c8c8c;font-weight:bold;font-size:10px;letter-spacing:0.059px">Click</div>
<div class="t" style="left:752.6px;top:818px;color:#626363;font-size:10px;letter-spacing:0.218px">on an empty area to deselect selection.</div>

<svg width="1500" height="904" viewBox="0 0 1500 904">
<g fill="#3a3b3b"><rect x="65.200" y="817" width="1.200" height="10"/><path d="M75.400 817v10l-8-5z"/><path d="M92.600 817v10l-8-5z"/></g>
<g fill="#4a4b4b"><path d="M195.800 817v10l7.700-5z"/><path d="M212.600 817v10l7.700-5z"/><rect x="220.900" y="817" width="1.200" height="10"/></g>
<g fill="none" stroke="#7a7b7b" stroke-width=".9"><rect x="231.700" y="815.600" width="8.600" height="10.600" rx="1" fill="#232424"/><path d="M240.800 818.200h1.400v10h-8.600v-1.600" stroke="#4e4f4f"/><path d="M233.400 818.100h5.200" stroke="#8c8c8c" stroke-width="1.200"/><path d="M233.400 820.300h5.200M233.400 822.200h5.200M233.400 824.100h5.200" stroke="#525353" stroke-width=".8"/></g>
<path d="M258.200 826.200c.2-4 .6-8.400 3.800-8.400s3.600 4.400 3.800 8.400zM256.600 826.600h10.800v1.600h-10.800z" fill="#393a3a"/>
</svg>
</div><!-- /win -->
<div id="winb"></div>
<!-- ===== dialog ===== -->
<style>
#dlg{will-change:transform;position:absolute;left:520.800px;top:266.700px;width:459.200px;height:334.300px;border-radius:8px;background:#444444;box-shadow:0 0 0 .8px rgba(20,20,20,.9),0 16px 34px 0 rgba(0,0,0,.48),0 2px 8px rgba(0,0,0,.25);overflow:hidden}
#dlg .t{color:#dadada;font-size:10px;-webkit-text-stroke:0.22px #dadada}
#dlgb{position:absolute;left:520.800px;top:266.700px;width:459.200px;height:334.300px;border-radius:8px;border:1px solid rgba(120,120,120,.42);pointer-events:none}
.rd{position:absolute;width:13.400px;height:13.400px;border-radius:50%;background:linear-gradient(#3a3a3a,#323232);border:1px solid #2a2a2a;box-shadow:0 .7px 0 rgba(255,255,255,.09)}
</style>
<div id="dlg">
<div class="a" style="left:0;top:0;width:460px;height:22.800px;background:#2a2b2b;border-bottom:1px solid #1f2020"></div>
<div class="t" style="left:6.300px;top:6.3px;letter-spacing:0.19px">Apply Master</div>
<div class="a" style="left:19.400px;top:38.400px;width:420.800px;height:243.600px;border:1px solid #505050;border-radius:5px;background:#474747"></div>
<div class="t" style="left:72.200px;top:51.3px;letter-spacing:0.2px">Apply Master:</div>
<div class="a" style="left:150px;top:47.200px;width:258.900px;height:19.400px;background:#323232;border-radius:2.500px;box-shadow:inset 0 1.500px 1px rgba(0,0,0,.22),0 .8px 0 rgba(255,255,255,.1)"></div>
<div class="a" style="left:391.700px;top:47.700px;width:17.200px;height:18.900px;background:linear-gradient(#3d3d3d,#343434);border-radius:0 2.500px 2.500px 0;border-left:1px solid #282828"></div>
<div class="a" style="left:155.900px;top:51.600px;width:8.800px;height:12.200px;background:#f2f2f2"></div>
<div class="t" style="left:172.400px;top:53.3px;letter-spacing:0.18px">Master A</div>
<div class="t" style="left:120.800px;top:87.3px;letter-spacing:-0.1px">To:</div>
<div class="rd" style="left:148.800px;top:83.300px"></div><div class="t" style="left:165.800px;top:88.3px;letter-spacing:0.15px">Current Spread</div>
<div class="rd" style="left:148.800px;top:104.600px"></div><div class="t" style="left:165.800px;top:109.3px;letter-spacing:0.0px">All Pages</div>
<div class="rd" style="left:148.800px;top:125.900px"></div><div class="t" style="left:165.800px;top:130.3px;letter-spacing:-0.02px">Odd Pages</div>
<div class="rd" style="left:148.800px;top:147.300px"></div><div class="t" style="left:165.800px;top:152.3px;letter-spacing:-0.13px">Even Pages</div>
<div class="rd" style="left:148.800px;top:168.300px"></div><div class="t" style="left:165.800px;top:173.3px;letter-spacing:0.12px">Specified Pages</div>
<div class="a" style="left:149.800px;top:105.600px;width:11.400px;height:5.700px;border-radius:6px 6px 0 0;background:#464646"></div><div class="a" style="left:152.400px;top:108.200px;width:6.200px;height:6.200px;border-radius:50%;background:#303030"></div>
<div class="a" style="left:154px;top:109.800px;width:3px;height:3px;border-radius:50%;background:#ececec"></div>
<div class="a" style="left:171.300px;top:192.900px;width:138.800px;height:21px;background:#404040;border:1px solid #2b2b2b"></div>
<div class="a" style="left:149.200px;top:229.100px;width:12.300px;height:12.700px;background:linear-gradient(#3a3a3a,#323232);border:1px solid #2a2a2a;border-radius:2.800px"></div>
<div class="t" style="left:164.600px;top:231.3px;letter-spacing:0.08px">Replace Existing</div>
<div class="t" style="left:96.300px;top:256.3px;letter-spacing:0.22px">Content:</div>
<div class="a" style="left:151px;top:252.300px;width:258px;height:16.200px;border-radius:4px;background:#1b1c1c;border:1px solid #242525;box-shadow:0 .8px 0 rgba(255,255,255,.08)"></div>
<div class="a" style="left:152px;top:253.300px;width:120.300px;height:14.200px;border-radius:3px 0 0 3px;background:linear-gradient(180deg,#3f4040,#2f3030)"></div>
<div class="t" style="left:152px;top:256.3px;width:120px;text-align:center;letter-spacing:.2px;text-indent:6px">Clear</div>
<div class="t" style="left:284.200px;top:256.3px;width:120px;text-align:center;letter-spacing:.3px">Migrate</div>
<div class="a" style="left:265.400px;top:296.300px;width:82.600px;height:19.800px;border-radius:3px;background:#3b3b3b;border:1px solid #282828;box-shadow:0 .8px 0 rgba(255,255,255,.06)"></div>
<div class="a" style="left:357.800px;top:296.300px;width:83.100px;height:19.800px;border-radius:3px;background:#3b3b3b;border:1px solid #282828;box-shadow:0 .8px 0 rgba(255,255,255,.06)"></div>
<div class="t" style="left:265.400px;top:301.3px;width:82.600px;text-align:center;letter-spacing:.25px">Cancel</div>
<div class="t" style="left:357.800px;top:301.3px;width:83.100px;text-align:center;letter-spacing:.2px">OK</div>
<svg width="460" height="335" viewBox="0 0 460 335"><path d="M397.400 55.100h6.200l-3.100 5z" fill="#d2d2d2"/><path d="M152.200 235.800l2.400 2.900 4.200-6.600" fill="none" stroke="#e8e8e8" stroke-width="1.250"/></svg>
</div>
<div id="dlgb"></div>
</body></html>
